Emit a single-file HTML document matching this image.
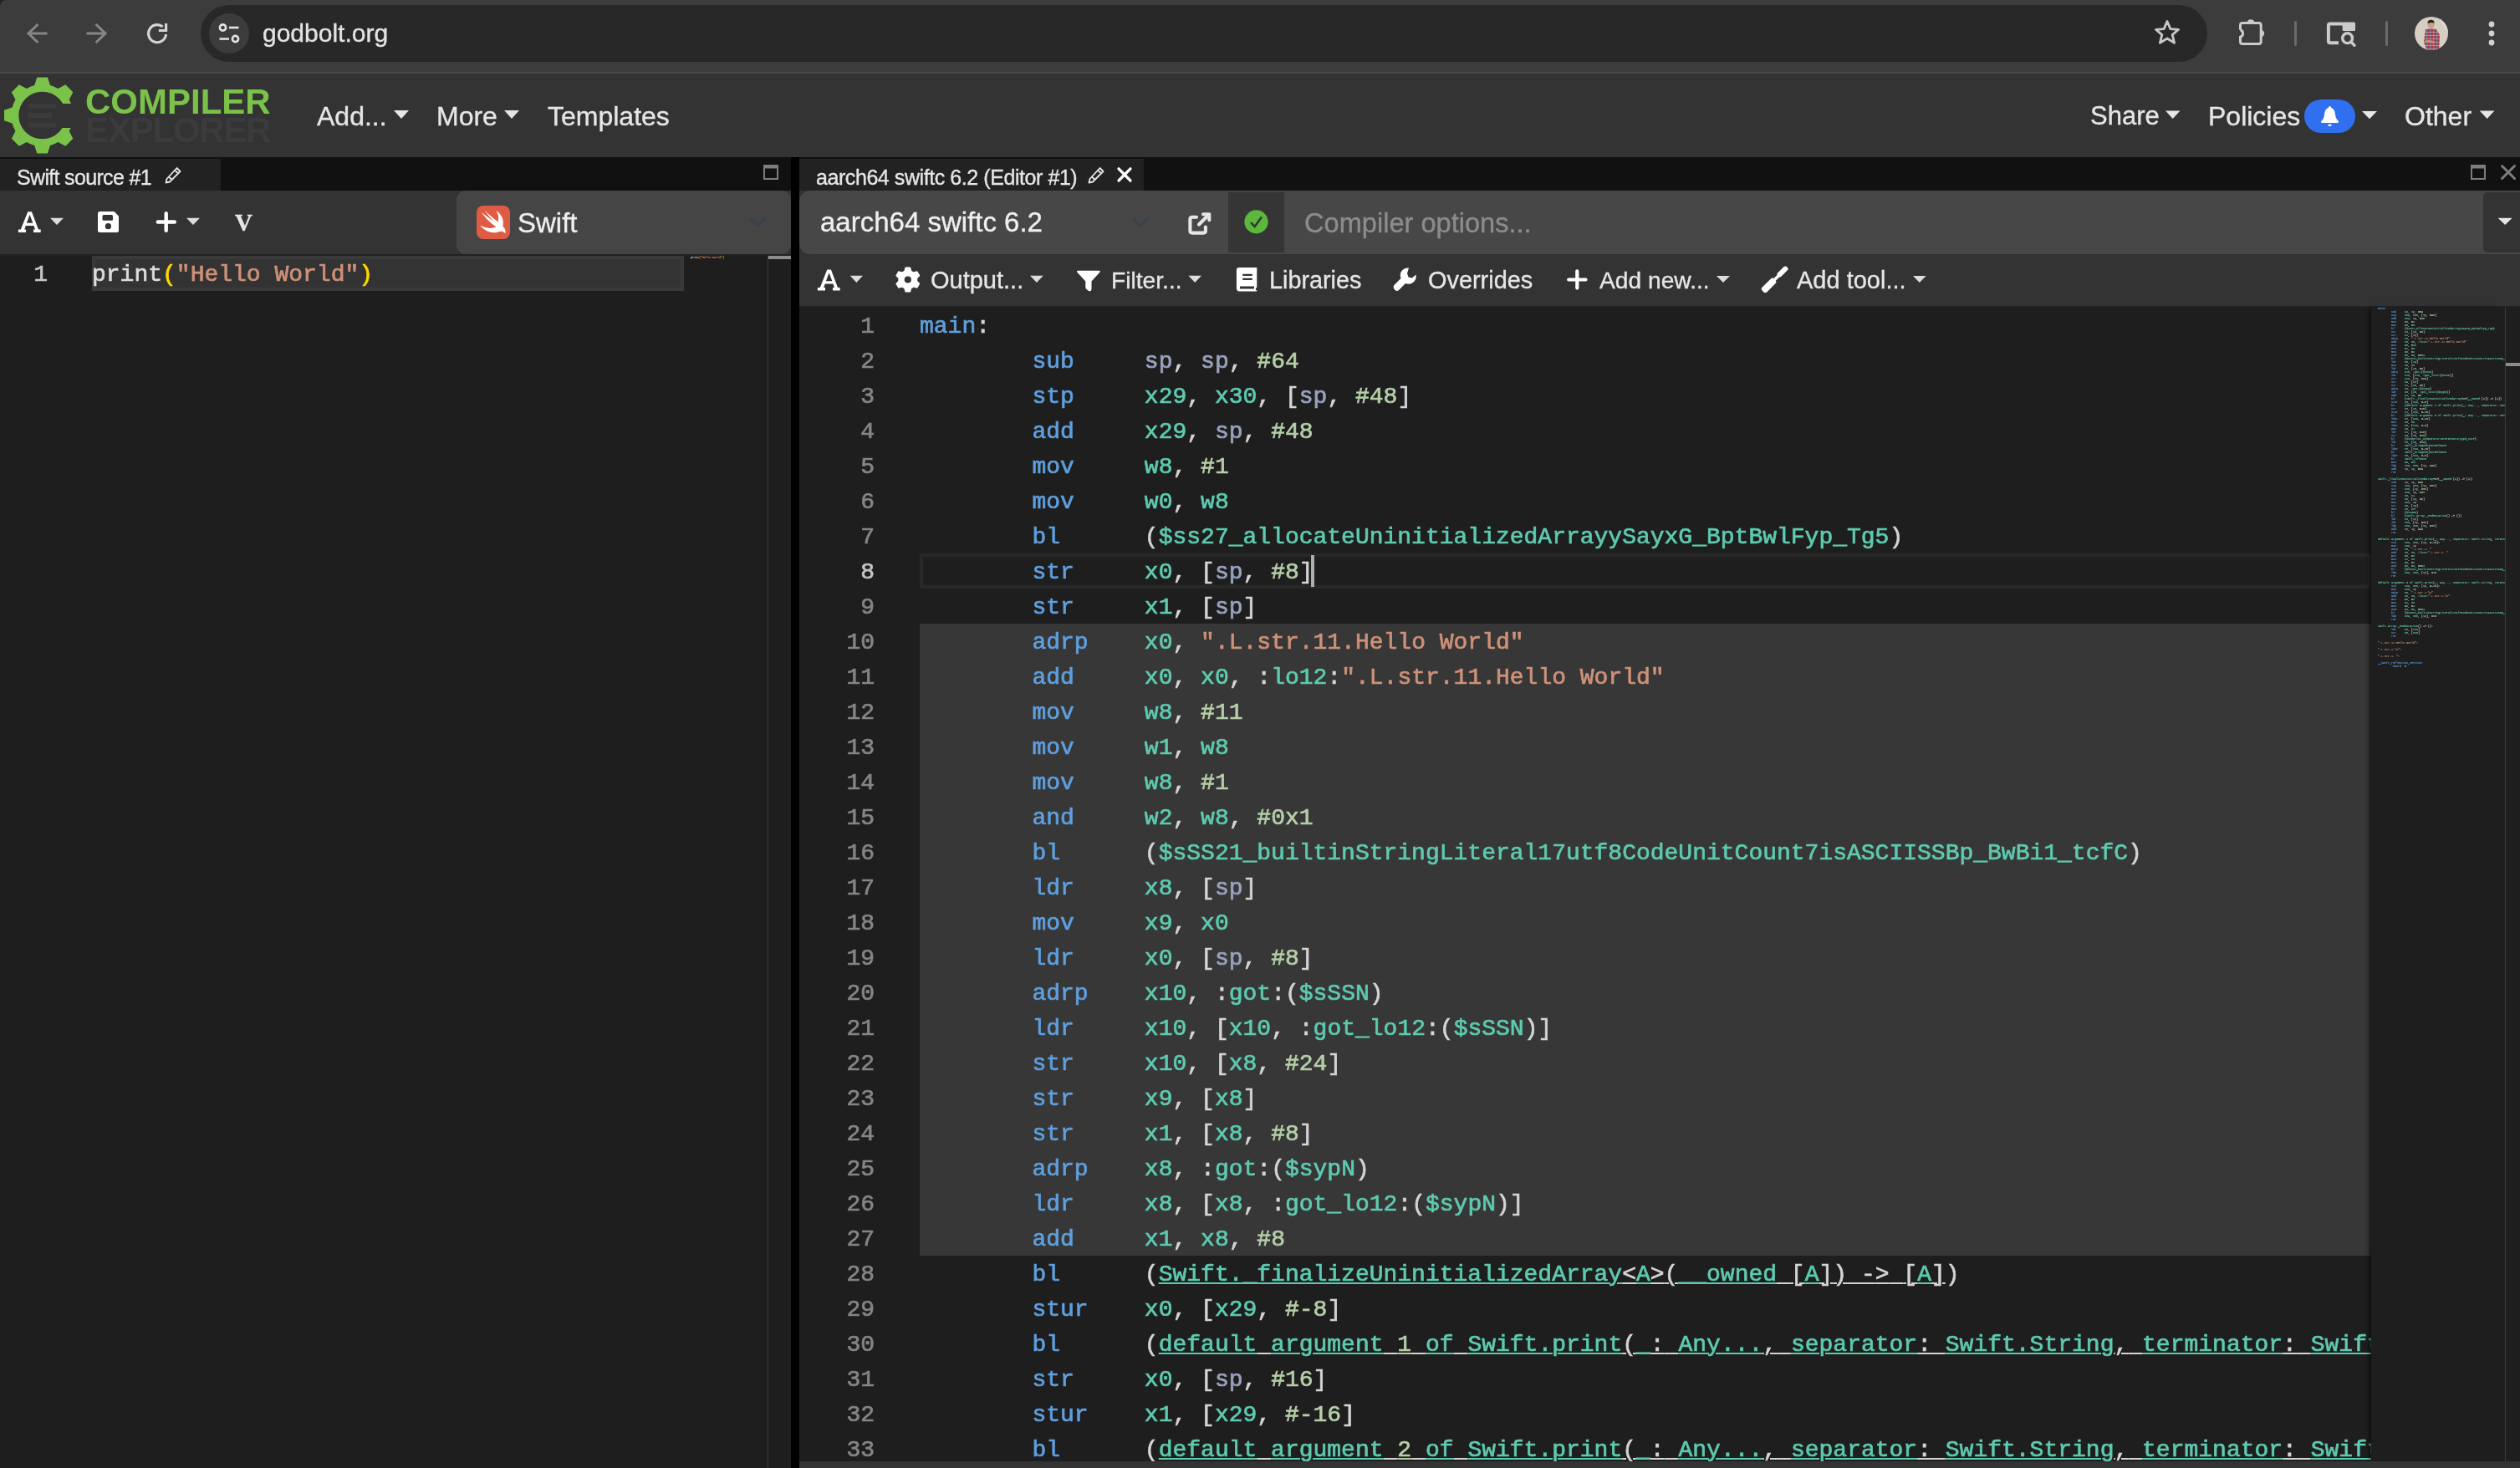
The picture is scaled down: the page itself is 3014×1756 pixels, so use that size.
<!DOCTYPE html>
<html><head><meta charset="utf-8">
<style>
html,body{margin:0;padding:0;}
body{width:3014px;height:1756px;overflow:hidden;background:#1e1e1e;position:relative;font-family:"Liberation Sans",sans-serif;}
.a{position:absolute;}
.t{position:absolute;white-space:pre;font-family:"Liberation Sans",sans-serif;-webkit-text-stroke:0.35px currentColor;}
.m{font-family:"Liberation Mono",monospace;-webkit-text-stroke:0.7px currentColor;}
svg{position:absolute;overflow:visible;}
.t,.a.m{will-change:transform;}
</style></head><body>

<!-- ===== Browser chrome ===== -->
<div class="a" style="left:0;top:0;width:3014px;height:86px;background:#3c3c3c;"></div>
<div class="a" style="left:0;top:86px;width:3014px;height:2px;background:#484a4a;"></div>
<!-- address pill -->
<div class="a" style="left:240px;top:6px;width:2400px;height:68px;border-radius:34px;background:#282828;"></div>
<div class="a" style="left:250px;top:16px;width:48px;height:48px;border-radius:24px;background:#3c3c3c;"></div>
<div class="t" id="url" style="left:314px;top:20px;font-size:30px;line-height:40px;color:#e3e3e3;">godbolt.org</div>


<!-- window corner -->
<div class="a" style="left:0;top:0;width:20px;height:20px;background:#1f2120;"></div>
<div class="a" style="left:0;top:0;width:40px;height:40px;border-top-left-radius:7px;background:#3c3c3c;"></div>
<!-- back / forward -->
<svg style="left:0;top:0" width="3014" height="88">
 <g fill="none" stroke="#868686" stroke-width="3" stroke-linecap="square">
  <path d="M34.5 40 H55 M44.3 30 L34 40 L44.3 50"/>
  <path d="M105 40 H125.5 M115.7 30 L126 40 L115.7 50"/>
 </g>
 <g fill="none" stroke="#d4d4d4" stroke-width="3.2">
  <path d="M198.5 41 A10.5 10.5 0 1 1 194.6 32" />
  <path d="M189.8 36.5 H198.6 V27.9" />
 </g>
 <!-- tune icon -->
 <g fill="none" stroke="#e3e3e3" stroke-width="2.6">
  <circle cx="266.5" cy="33" r="3.6"/>
  <path d="M274 33 H285.5"/>
  <path d="M262.5 46.5 H274"/>
  <circle cx="281.5" cy="46.5" r="3.6"/>
 </g>
 <!-- star -->
 <path d="M2592 25.5 L2595.9 34.6 L2605.6 35.3 L2598.2 41.6 L2600.6 51.3 L2592 46 L2583.4 51.3 L2585.8 41.6 L2578.4 35.3 L2588.1 34.6 Z" fill="none" stroke="#c8c8c8" stroke-width="2.8" stroke-linejoin="round"/>
 <!-- puzzle -->
 <path d="M2679.5 35.8 V30 Q2679.5 27.5 2682 27.5 H2701.5 Q2704.2 27.5 2704.2 30 V50 Q2704.2 52.4 2701.5 52.4 H2682 Q2679.5 52.4 2679.5 50 V44.2 A4.4 4.4 0 0 0 2679.5 35.8" fill="none" stroke="#cbcbcb" stroke-width="3"/>
 <path d="M2687.8 27.5 A4.2 4.2 0 0 1 2696.2 27.5 Z" fill="#cbcbcb"/>
 <path d="M2704 35.8 A4.2 4.2 0 0 1 2704 44.2 Z" fill="#cbcbcb"/>
 <rect x="2744" y="25" width="3" height="30" rx="1.5" fill="#6a6a6a"/>
 <rect x="2853" y="25" width="3" height="30" rx="1.5" fill="#6a6a6a"/>
 <!-- tab search -->
 <path d="M2797 51.2 H2787 Q2784.9 51.2 2784.9 49 V30.8 Q2784.9 28.6 2787 28.6 H2802" fill="none" stroke="#cbcbcb" stroke-width="4"/>
 <rect x="2801.6" y="26.6" width="15.4" height="10.4" rx="1.5" fill="#cbcbcb"/>
 <circle cx="2807.6" cy="45.7" r="5.9" fill="none" stroke="#cbcbcb" stroke-width="3.4"/>
 <path d="M2812 50.2 L2816 54.2" stroke="#cbcbcb" stroke-width="3.4" stroke-linecap="round"/>
 <!-- avatar -->
 <defs>
  <clipPath id="avc"><circle cx="2908" cy="40" r="20"/></clipPath>
  <pattern id="plaid" x="0" y="0" width="4" height="4" patternUnits="userSpaceOnUse">
   <rect width="4" height="4" fill="#a63a48"/><rect x="2" width="1.3" height="4" fill="#6b7fa0"/><rect y="2" width="4" height="1" fill="#c8b8c0" fill-opacity="0.6"/>
  </pattern>
 </defs>
 <g clip-path="url(#avc)">
  <rect x="2886" y="18" width="44" height="44" fill="#d5cec3"/>
  <path d="M2915 18 L2930 42 V30 Z" fill="#e2ddd4"/>
  <path d="M2901 35 Q2907 33 2914 35 L2918 42 L2917 62 H2903 L2899 50 Z" fill="url(#plaid)"/>
  <path d="M2900 48.5 Q2907 47 2913 50 L2911 52 Q2905 50.5 2900.5 51 Z" fill="#c89070"/>
  <ellipse cx="2907.5" cy="29.5" rx="4" ry="4.6" fill="#caa080"/>
  <path d="M2903.4 28 Q2903.5 23.8 2907.6 23.8 Q2911.6 23.8 2911.6 28 Q2909 26 2903.4 28 Z" fill="#2a211c"/>
 </g>
 <!-- kebab -->
 <circle cx="2980" cy="29" r="3.4" fill="#d0d0d0"/>
 <circle cx="2980" cy="40" r="3.4" fill="#d0d0d0"/>
 <circle cx="2980" cy="51" r="3.4" fill="#d0d0d0"/>
</svg>

<!-- ===== Navbar ===== -->
<div class="a" style="left:0;top:88px;width:3014px;height:100px;background:#333333;"></div>


<svg style="left:0;top:0" width="3014" height="188">
 <path d="M41.2 102.0 L44.3 92.4 L56.9 92.4 L60.0 102.0 A37.2 37.2 0 0 1 69.4 105.9 L78.4 101.3 L87.3 110.2 L82.7 119.2 A37.2 37.2 0 0 1 86.6 128.6 L96.2 131.7 L96.2 144.3 L86.6 147.4 A37.2 37.2 0 0 1 82.7 156.8 L87.3 165.8 L78.4 174.7 L69.4 170.1 A37.2 37.2 0 0 1 60.0 174.0 L56.9 183.6 L44.3 183.6 L41.2 174.0 A37.2 37.2 0 0 1 31.8 170.1 L22.8 174.7 L13.9 165.8 L18.5 156.8 A37.2 37.2 0 0 1 14.6 147.4 L5.0 144.3 L5.0 131.7 L14.6 128.6 A37.2 37.2 0 0 1 18.5 119.2 L13.9 110.2 L22.8 101.3 L31.8 105.9 A37.2 37.2 0 0 1 41.2 102.0 Z" fill="#7bc24a"/>
 <circle cx="50.6" cy="138.0" r="28.3" fill="#333333"/>
 <rect x="56" y="124" width="50" height="28.5" fill="#333333" shape-rendering="crispEdges"/>
 <rect x="33.7" y="124.2" width="33.8" height="5.6" fill="#3b3b3e"/>
 <rect x="33.7" y="135.2" width="28" height="5.8" fill="#3b3b3e"/>
 <rect x="33.7" y="146.7" width="33.8" height="5.8" fill="#3b3b3e"/>
 <g fill="#e6e6e6">
  <path d="M471 132 H489 L480 142 Z"/>
  <path d="M603 132 H621 L612 142 Z"/>
  <path d="M2590 132.6 H2607.5 L2598.7 142 Z"/>
  <path d="M2825 133 H2843 L2834 142.2 Z"/>
  <path d="M2965.7 132.6 H2983.5 L2974.6 142 Z"/>
 </g>
 <rect x="2756" y="119" width="61" height="40" rx="20" fill="#3070f0"/>
 <path d="M2786.5 127 Q2788 127 2788.3 129 Q2792.5 130.5 2793 137 Q2793.3 142 2797 145.3 Q2797.3 147 2795.5 147 H2777.5 Q2775.8 147 2776.1 145.3 Q2779.7 142 2780 137 Q2780.5 130.5 2784.7 129 Q2785 127 2786.5 127 Z" fill="#fff"/>
 <path d="M2784 148.8 H2789 Q2788.5 151.2 2786.5 151.2 Q2784.5 151.2 2784 148.8 Z" fill="#fff"/>
</svg>
<div class="t" style="left:102px;top:101px;font-size:42px;line-height:42px;font-weight:bold;color:#7bc24a;letter-spacing:0px;-webkit-text-stroke:0;">COMPILER</div>
<div class="t" style="left:102px;top:135px;font-size:42px;line-height:42px;font-weight:bold;color:#3b3b3e;letter-spacing:-1.2px;-webkit-text-stroke:0;">EXPLORER</div>
<div class="t" style="left:379px;top:119px;font-size:32px;line-height:40px;color:#e6e6e6;">Add...</div>
<div class="t" style="left:522px;top:119px;font-size:32px;line-height:40px;color:#e6e6e6;">More</div>
<div class="t" style="left:655px;top:119px;font-size:32px;line-height:40px;color:#e6e6e6;">Templates</div>
<div class="t" style="left:2500px;top:119px;font-size:31px;line-height:40px;color:#e6e6e6;">Share</div>
<div class="t" style="left:2641px;top:119px;font-size:32px;line-height:40px;color:#e6e6e6;">Policies</div>
<div class="t" style="left:2876px;top:119px;font-size:32px;line-height:40px;color:#e6e6e6;">Other</div>

<!-- ===== Layout ===== -->
<div class="a" style="left:0;top:188px;width:3014px;height:1568px;background:#000;"></div>

<!-- left pane -->
<div class="a" style="left:0;top:188px;width:946px;height:40px;background:#111;"></div>
<div class="a" style="left:0;top:190px;width:264px;height:38px;background:#222;"></div>
<div class="a" style="left:0;top:228px;width:946px;height:76px;background:#333;"></div>
<div class="a" style="left:0;top:304px;width:946px;height:1452px;background:#1e1e1e;"></div>

<!-- right pane -->
<div class="a" style="left:956px;top:188px;width:2058px;height:40px;background:#111;"></div>
<div class="a" style="left:956px;top:190px;width:412px;height:38px;background:#222;"></div>
<div class="a" style="left:956px;top:228px;width:2058px;height:138px;background:#333;"></div>
<div class="a" style="left:956px;top:366px;width:2058px;height:1390px;background:#1e1e1e;"></div>












<!-- ===== EDITORS ===== -->
<div class="a" style="left:0;top:304px;width:946px;height:2px;background:#202224;"></div>
<div class="a" style="left:110px;top:306px;width:700px;height:34px;border:4px solid #3a3a3a;background:#333;"></div>
<div class="t m" style="left:0;top:306px;width:57px;text-align:right;font-size:28px;line-height:42px;height:42px;padding-top:2px;color:#c6c6c6;">1</div>
<div class="a m" style="left:110px;top:306px;font-size:28px;line-height:42px;white-space:pre;padding-top:2px;"><span style="color:#dcdcdc">print</span><span style="color:#ffd700">(</span><span style="color:#ce9178">&quot;Hello World&quot;</span><span style="color:#ffd700">)</span></div>
<div class="a" style="left:826px;top:306px;width:92px;height:4px;overflow:hidden;font-family:'Liberation Mono',monospace;font-size:3.3333px;line-height:4px;white-space:pre;-webkit-text-stroke:0.1px currentColor;"><span style="color:#dcdcdc">print</span><span style="color:#ffd700">(</span><span style="color:#ce9178">&quot;Hello World&quot;</span><span style="color:#ffd700">)</span></div>
<div class="a" style="left:918px;top:306px;width:1px;height:1450px;background:#3a3a3a;"></div>
<div class="a" style="left:919px;top:306px;width:27px;height:4px;background:#8c8c8c;"></div>
<div class="a" style="left:956px;top:366px;width:2058px;height:2px;background:#202224;"></div>
<div class="a" style="left:1100px;top:746px;width:1736px;height:756px;background:#373737;"></div>
<div class="a" style="left:1100px;top:662px;width:1728px;height:34px;border:4px solid #282828;"></div>
<div class="t m" style="left:946px;top:368px;width:100px;text-align:right;font-size:28px;line-height:42px;height:42px;padding-top:2px;color:#858585;">1</div>
<div class="t m" style="left:946px;top:410px;width:100px;text-align:right;font-size:28px;line-height:42px;height:42px;padding-top:2px;color:#858585;">2</div>
<div class="t m" style="left:946px;top:452px;width:100px;text-align:right;font-size:28px;line-height:42px;height:42px;padding-top:2px;color:#858585;">3</div>
<div class="t m" style="left:946px;top:494px;width:100px;text-align:right;font-size:28px;line-height:42px;height:42px;padding-top:2px;color:#858585;">4</div>
<div class="t m" style="left:946px;top:536px;width:100px;text-align:right;font-size:28px;line-height:42px;height:42px;padding-top:2px;color:#858585;">5</div>
<div class="t m" style="left:946px;top:578px;width:100px;text-align:right;font-size:28px;line-height:42px;height:42px;padding-top:2px;color:#858585;">6</div>
<div class="t m" style="left:946px;top:620px;width:100px;text-align:right;font-size:28px;line-height:42px;height:42px;padding-top:2px;color:#858585;">7</div>
<div class="t m" style="left:946px;top:662px;width:100px;text-align:right;font-size:28px;line-height:42px;height:42px;padding-top:2px;color:#c6c6c6;">8</div>
<div class="t m" style="left:946px;top:704px;width:100px;text-align:right;font-size:28px;line-height:42px;height:42px;padding-top:2px;color:#858585;">9</div>
<div class="t m" style="left:946px;top:746px;width:100px;text-align:right;font-size:28px;line-height:42px;height:42px;padding-top:2px;color:#858585;">10</div>
<div class="t m" style="left:946px;top:788px;width:100px;text-align:right;font-size:28px;line-height:42px;height:42px;padding-top:2px;color:#858585;">11</div>
<div class="t m" style="left:946px;top:830px;width:100px;text-align:right;font-size:28px;line-height:42px;height:42px;padding-top:2px;color:#858585;">12</div>
<div class="t m" style="left:946px;top:872px;width:100px;text-align:right;font-size:28px;line-height:42px;height:42px;padding-top:2px;color:#858585;">13</div>
<div class="t m" style="left:946px;top:914px;width:100px;text-align:right;font-size:28px;line-height:42px;height:42px;padding-top:2px;color:#858585;">14</div>
<div class="t m" style="left:946px;top:956px;width:100px;text-align:right;font-size:28px;line-height:42px;height:42px;padding-top:2px;color:#858585;">15</div>
<div class="t m" style="left:946px;top:998px;width:100px;text-align:right;font-size:28px;line-height:42px;height:42px;padding-top:2px;color:#858585;">16</div>
<div class="t m" style="left:946px;top:1040px;width:100px;text-align:right;font-size:28px;line-height:42px;height:42px;padding-top:2px;color:#858585;">17</div>
<div class="t m" style="left:946px;top:1082px;width:100px;text-align:right;font-size:28px;line-height:42px;height:42px;padding-top:2px;color:#858585;">18</div>
<div class="t m" style="left:946px;top:1124px;width:100px;text-align:right;font-size:28px;line-height:42px;height:42px;padding-top:2px;color:#858585;">19</div>
<div class="t m" style="left:946px;top:1166px;width:100px;text-align:right;font-size:28px;line-height:42px;height:42px;padding-top:2px;color:#858585;">20</div>
<div class="t m" style="left:946px;top:1208px;width:100px;text-align:right;font-size:28px;line-height:42px;height:42px;padding-top:2px;color:#858585;">21</div>
<div class="t m" style="left:946px;top:1250px;width:100px;text-align:right;font-size:28px;line-height:42px;height:42px;padding-top:2px;color:#858585;">22</div>
<div class="t m" style="left:946px;top:1292px;width:100px;text-align:right;font-size:28px;line-height:42px;height:42px;padding-top:2px;color:#858585;">23</div>
<div class="t m" style="left:946px;top:1334px;width:100px;text-align:right;font-size:28px;line-height:42px;height:42px;padding-top:2px;color:#858585;">24</div>
<div class="t m" style="left:946px;top:1376px;width:100px;text-align:right;font-size:28px;line-height:42px;height:42px;padding-top:2px;color:#858585;">25</div>
<div class="t m" style="left:946px;top:1418px;width:100px;text-align:right;font-size:28px;line-height:42px;height:42px;padding-top:2px;color:#858585;">26</div>
<div class="t m" style="left:946px;top:1460px;width:100px;text-align:right;font-size:28px;line-height:42px;height:42px;padding-top:2px;color:#858585;">27</div>
<div class="t m" style="left:946px;top:1502px;width:100px;text-align:right;font-size:28px;line-height:42px;height:42px;padding-top:2px;color:#858585;">28</div>
<div class="t m" style="left:946px;top:1544px;width:100px;text-align:right;font-size:28px;line-height:42px;height:42px;padding-top:2px;color:#858585;">29</div>
<div class="t m" style="left:946px;top:1586px;width:100px;text-align:right;font-size:28px;line-height:42px;height:42px;padding-top:2px;color:#858585;">30</div>
<div class="t m" style="left:946px;top:1628px;width:100px;text-align:right;font-size:28px;line-height:42px;height:42px;padding-top:2px;color:#858585;">31</div>
<div class="t m" style="left:946px;top:1670px;width:100px;text-align:right;font-size:28px;line-height:42px;height:42px;padding-top:2px;color:#858585;">32</div>
<div class="t m" style="left:946px;top:1712px;width:100px;text-align:right;font-size:28px;line-height:42px;height:42px;padding-top:2px;color:#858585;">33</div>
<div class="a m" style="left:1100px;top:368px;width:1736px;height:1380px;overflow:hidden;font-size:28px;line-height:42px;"><div style="height:42px;padding-top:2px;box-sizing:border-box;white-space:pre;"><span style="color:#5f9fdd">main</span><span style="color:#d4d4d4">:</span></div><div style="height:42px;padding-top:2px;box-sizing:border-box;white-space:pre;"><span style="color:#d4d4d4">        </span><span style="color:#5f9fdd">sub</span><span style="color:#d4d4d4">     </span><span style="color:#9aa2bd">sp</span><span style="color:#d4d4d4">,</span><span style="color:#d4d4d4"> </span><span style="color:#9aa2bd">sp</span><span style="color:#d4d4d4">,</span><span style="color:#d4d4d4"> </span><span style="color:#b5cea8">#64</span></div><div style="height:42px;padding-top:2px;box-sizing:border-box;white-space:pre;"><span style="color:#d4d4d4">        </span><span style="color:#5f9fdd">stp</span><span style="color:#d4d4d4">     </span><span style="color:#5ecab0">x29</span><span style="color:#d4d4d4">,</span><span style="color:#d4d4d4"> </span><span style="color:#5ecab0">x30</span><span style="color:#d4d4d4">,</span><span style="color:#d4d4d4"> </span><span style="color:#d4d4d4">[</span><span style="color:#9aa2bd">sp</span><span style="color:#d4d4d4">,</span><span style="color:#d4d4d4"> </span><span style="color:#b5cea8">#48</span><span style="color:#d4d4d4">]</span></div><div style="height:42px;padding-top:2px;box-sizing:border-box;white-space:pre;"><span style="color:#d4d4d4">        </span><span style="color:#5f9fdd">add</span><span style="color:#d4d4d4">     </span><span style="color:#5ecab0">x29</span><span style="color:#d4d4d4">,</span><span style="color:#d4d4d4"> </span><span style="color:#9aa2bd">sp</span><span style="color:#d4d4d4">,</span><span style="color:#d4d4d4"> </span><span style="color:#b5cea8">#48</span></div><div style="height:42px;padding-top:2px;box-sizing:border-box;white-space:pre;"><span style="color:#d4d4d4">        </span><span style="color:#5f9fdd">mov</span><span style="color:#d4d4d4">     </span><span style="color:#5ecab0">w8</span><span style="color:#d4d4d4">,</span><span style="color:#d4d4d4"> </span><span style="color:#b5cea8">#1</span></div><div style="height:42px;padding-top:2px;box-sizing:border-box;white-space:pre;"><span style="color:#d4d4d4">        </span><span style="color:#5f9fdd">mov</span><span style="color:#d4d4d4">     </span><span style="color:#5ecab0">w0</span><span style="color:#d4d4d4">,</span><span style="color:#d4d4d4"> </span><span style="color:#5ecab0">w8</span></div><div style="height:42px;padding-top:2px;box-sizing:border-box;white-space:pre;"><span style="color:#d4d4d4">        </span><span style="color:#5f9fdd">bl</span><span style="color:#d4d4d4">      </span><span style="color:#d4d4d4">(</span><span style="color:#5ecab0">$ss27_allocateUninitializedArrayySayxG_BptBwlFyp_Tg5</span><span style="color:#d4d4d4">)</span></div><div style="height:42px;padding-top:2px;box-sizing:border-box;white-space:pre;"><span style="color:#d4d4d4">        </span><span style="color:#5f9fdd">str</span><span style="color:#d4d4d4">     </span><span style="color:#5ecab0">x0</span><span style="color:#d4d4d4">,</span><span style="color:#d4d4d4"> </span><span style="color:#d4d4d4">[</span><span style="color:#9aa2bd">sp</span><span style="color:#d4d4d4">,</span><span style="color:#d4d4d4"> </span><span style="color:#b5cea8">#8</span><span style="color:#d4d4d4">]</span></div><div style="height:42px;padding-top:2px;box-sizing:border-box;white-space:pre;"><span style="color:#d4d4d4">        </span><span style="color:#5f9fdd">str</span><span style="color:#d4d4d4">     </span><span style="color:#5ecab0">x1</span><span style="color:#d4d4d4">,</span><span style="color:#d4d4d4"> </span><span style="color:#d4d4d4">[</span><span style="color:#9aa2bd">sp</span><span style="color:#d4d4d4">]</span></div><div style="height:42px;padding-top:2px;box-sizing:border-box;white-space:pre;"><span style="color:#d4d4d4">        </span><span style="color:#5f9fdd">adrp</span><span style="color:#d4d4d4">    </span><span style="color:#5ecab0">x0</span><span style="color:#d4d4d4">,</span><span style="color:#d4d4d4"> </span><span style="color:#ce9178">&quot;.L.str.11.Hello World&quot;</span></div><div style="height:42px;padding-top:2px;box-sizing:border-box;white-space:pre;"><span style="color:#d4d4d4">        </span><span style="color:#5f9fdd">add</span><span style="color:#d4d4d4">     </span><span style="color:#5ecab0">x0</span><span style="color:#d4d4d4">,</span><span style="color:#d4d4d4"> </span><span style="color:#5ecab0">x0</span><span style="color:#d4d4d4">,</span><span style="color:#d4d4d4"> </span><span style="color:#d4d4d4">:</span><span style="color:#5ecab0">lo12</span><span style="color:#d4d4d4">:</span><span style="color:#ce9178">&quot;.L.str.11.Hello World&quot;</span></div><div style="height:42px;padding-top:2px;box-sizing:border-box;white-space:pre;"><span style="color:#d4d4d4">        </span><span style="color:#5f9fdd">mov</span><span style="color:#d4d4d4">     </span><span style="color:#5ecab0">w8</span><span style="color:#d4d4d4">,</span><span style="color:#d4d4d4"> </span><span style="color:#b5cea8">#11</span></div><div style="height:42px;padding-top:2px;box-sizing:border-box;white-space:pre;"><span style="color:#d4d4d4">        </span><span style="color:#5f9fdd">mov</span><span style="color:#d4d4d4">     </span><span style="color:#5ecab0">w1</span><span style="color:#d4d4d4">,</span><span style="color:#d4d4d4"> </span><span style="color:#5ecab0">w8</span></div><div style="height:42px;padding-top:2px;box-sizing:border-box;white-space:pre;"><span style="color:#d4d4d4">        </span><span style="color:#5f9fdd">mov</span><span style="color:#d4d4d4">     </span><span style="color:#5ecab0">w8</span><span style="color:#d4d4d4">,</span><span style="color:#d4d4d4"> </span><span style="color:#b5cea8">#1</span></div><div style="height:42px;padding-top:2px;box-sizing:border-box;white-space:pre;"><span style="color:#d4d4d4">        </span><span style="color:#5f9fdd">and</span><span style="color:#d4d4d4">     </span><span style="color:#5ecab0">w2</span><span style="color:#d4d4d4">,</span><span style="color:#d4d4d4"> </span><span style="color:#5ecab0">w8</span><span style="color:#d4d4d4">,</span><span style="color:#d4d4d4"> </span><span style="color:#b5cea8">#0x1</span></div><div style="height:42px;padding-top:2px;box-sizing:border-box;white-space:pre;"><span style="color:#d4d4d4">        </span><span style="color:#5f9fdd">bl</span><span style="color:#d4d4d4">      </span><span style="color:#d4d4d4">(</span><span style="color:#5ecab0">$sSS21_builtinStringLiteral17utf8CodeUnitCount7isASCIISSBp_BwBi1_tcfC</span><span style="color:#d4d4d4">)</span></div><div style="height:42px;padding-top:2px;box-sizing:border-box;white-space:pre;"><span style="color:#d4d4d4">        </span><span style="color:#5f9fdd">ldr</span><span style="color:#d4d4d4">     </span><span style="color:#5ecab0">x8</span><span style="color:#d4d4d4">,</span><span style="color:#d4d4d4"> </span><span style="color:#d4d4d4">[</span><span style="color:#9aa2bd">sp</span><span style="color:#d4d4d4">]</span></div><div style="height:42px;padding-top:2px;box-sizing:border-box;white-space:pre;"><span style="color:#d4d4d4">        </span><span style="color:#5f9fdd">mov</span><span style="color:#d4d4d4">     </span><span style="color:#5ecab0">x9</span><span style="color:#d4d4d4">,</span><span style="color:#d4d4d4"> </span><span style="color:#5ecab0">x0</span></div><div style="height:42px;padding-top:2px;box-sizing:border-box;white-space:pre;"><span style="color:#d4d4d4">        </span><span style="color:#5f9fdd">ldr</span><span style="color:#d4d4d4">     </span><span style="color:#5ecab0">x0</span><span style="color:#d4d4d4">,</span><span style="color:#d4d4d4"> </span><span style="color:#d4d4d4">[</span><span style="color:#9aa2bd">sp</span><span style="color:#d4d4d4">,</span><span style="color:#d4d4d4"> </span><span style="color:#b5cea8">#8</span><span style="color:#d4d4d4">]</span></div><div style="height:42px;padding-top:2px;box-sizing:border-box;white-space:pre;"><span style="color:#d4d4d4">        </span><span style="color:#5f9fdd">adrp</span><span style="color:#d4d4d4">    </span><span style="color:#5ecab0">x10</span><span style="color:#d4d4d4">,</span><span style="color:#d4d4d4"> </span><span style="color:#d4d4d4">:</span><span style="color:#5ecab0">got</span><span style="color:#d4d4d4">:</span><span style="color:#d4d4d4">(</span><span style="color:#5ecab0">$sSSN</span><span style="color:#d4d4d4">)</span></div><div style="height:42px;padding-top:2px;box-sizing:border-box;white-space:pre;"><span style="color:#d4d4d4">        </span><span style="color:#5f9fdd">ldr</span><span style="color:#d4d4d4">     </span><span style="color:#5ecab0">x10</span><span style="color:#d4d4d4">,</span><span style="color:#d4d4d4"> </span><span style="color:#d4d4d4">[</span><span style="color:#5ecab0">x10</span><span style="color:#d4d4d4">,</span><span style="color:#d4d4d4"> </span><span style="color:#d4d4d4">:</span><span style="color:#5ecab0">got_lo12</span><span style="color:#d4d4d4">:</span><span style="color:#d4d4d4">(</span><span style="color:#5ecab0">$sSSN</span><span style="color:#d4d4d4">)</span><span style="color:#d4d4d4">]</span></div><div style="height:42px;padding-top:2px;box-sizing:border-box;white-space:pre;"><span style="color:#d4d4d4">        </span><span style="color:#5f9fdd">str</span><span style="color:#d4d4d4">     </span><span style="color:#5ecab0">x10</span><span style="color:#d4d4d4">,</span><span style="color:#d4d4d4"> </span><span style="color:#d4d4d4">[</span><span style="color:#5ecab0">x8</span><span style="color:#d4d4d4">,</span><span style="color:#d4d4d4"> </span><span style="color:#b5cea8">#24</span><span style="color:#d4d4d4">]</span></div><div style="height:42px;padding-top:2px;box-sizing:border-box;white-space:pre;"><span style="color:#d4d4d4">        </span><span style="color:#5f9fdd">str</span><span style="color:#d4d4d4">     </span><span style="color:#5ecab0">x9</span><span style="color:#d4d4d4">,</span><span style="color:#d4d4d4"> </span><span style="color:#d4d4d4">[</span><span style="color:#5ecab0">x8</span><span style="color:#d4d4d4">]</span></div><div style="height:42px;padding-top:2px;box-sizing:border-box;white-space:pre;"><span style="color:#d4d4d4">        </span><span style="color:#5f9fdd">str</span><span style="color:#d4d4d4">     </span><span style="color:#5ecab0">x1</span><span style="color:#d4d4d4">,</span><span style="color:#d4d4d4"> </span><span style="color:#d4d4d4">[</span><span style="color:#5ecab0">x8</span><span style="color:#d4d4d4">,</span><span style="color:#d4d4d4"> </span><span style="color:#b5cea8">#8</span><span style="color:#d4d4d4">]</span></div><div style="height:42px;padding-top:2px;box-sizing:border-box;white-space:pre;"><span style="color:#d4d4d4">        </span><span style="color:#5f9fdd">adrp</span><span style="color:#d4d4d4">    </span><span style="color:#5ecab0">x8</span><span style="color:#d4d4d4">,</span><span style="color:#d4d4d4"> </span><span style="color:#d4d4d4">:</span><span style="color:#5ecab0">got</span><span style="color:#d4d4d4">:</span><span style="color:#d4d4d4">(</span><span style="color:#5ecab0">$sypN</span><span style="color:#d4d4d4">)</span></div><div style="height:42px;padding-top:2px;box-sizing:border-box;white-space:pre;"><span style="color:#d4d4d4">        </span><span style="color:#5f9fdd">ldr</span><span style="color:#d4d4d4">     </span><span style="color:#5ecab0">x8</span><span style="color:#d4d4d4">,</span><span style="color:#d4d4d4"> </span><span style="color:#d4d4d4">[</span><span style="color:#5ecab0">x8</span><span style="color:#d4d4d4">,</span><span style="color:#d4d4d4"> </span><span style="color:#d4d4d4">:</span><span style="color:#5ecab0">got_lo12</span><span style="color:#d4d4d4">:</span><span style="color:#d4d4d4">(</span><span style="color:#5ecab0">$sypN</span><span style="color:#d4d4d4">)</span><span style="color:#d4d4d4">]</span></div><div style="height:42px;padding-top:2px;box-sizing:border-box;white-space:pre;"><span style="color:#d4d4d4">        </span><span style="color:#5f9fdd">add</span><span style="color:#d4d4d4">     </span><span style="color:#5ecab0">x1</span><span style="color:#d4d4d4">,</span><span style="color:#d4d4d4"> </span><span style="color:#5ecab0">x8</span><span style="color:#d4d4d4">,</span><span style="color:#d4d4d4"> </span><span style="color:#b5cea8">#8</span></div><div style="height:42px;padding-top:2px;box-sizing:border-box;white-space:pre;"><span style="color:#d4d4d4">        </span><span style="color:#5f9fdd">bl</span><span style="color:#d4d4d4">      </span><span style="color:#d4d4d4">(</span><span style="color:#5ecab0;text-decoration:underline;text-underline-offset:2px;text-decoration-thickness:2px">Swift._finalizeUninitializedArray</span><span style="color:#d4d4d4;text-decoration:underline;text-underline-offset:2px;text-decoration-thickness:2px">&lt;</span><span style="color:#5ecab0;text-decoration:underline;text-underline-offset:2px;text-decoration-thickness:2px">A</span><span style="color:#d4d4d4;text-decoration:underline;text-underline-offset:2px;text-decoration-thickness:2px">&gt;</span><span style="color:#d4d4d4;text-decoration:underline;text-underline-offset:2px;text-decoration-thickness:2px">(</span><span style="color:#5ecab0;text-decoration:underline;text-underline-offset:2px;text-decoration-thickness:2px">__owned</span><span style="color:#d4d4d4;text-decoration:underline;text-underline-offset:2px;text-decoration-thickness:2px"> </span><span style="color:#d4d4d4;text-decoration:underline;text-underline-offset:2px;text-decoration-thickness:2px">[</span><span style="color:#5ecab0;text-decoration:underline;text-underline-offset:2px;text-decoration-thickness:2px">A</span><span style="color:#d4d4d4;text-decoration:underline;text-underline-offset:2px;text-decoration-thickness:2px">]</span><span style="color:#d4d4d4;text-decoration:underline;text-underline-offset:2px;text-decoration-thickness:2px">)</span><span style="color:#d4d4d4;text-decoration:underline;text-underline-offset:2px;text-decoration-thickness:2px"> </span><span style="color:#d4d4d4;text-decoration:underline;text-underline-offset:2px;text-decoration-thickness:2px">-</span><span style="color:#d4d4d4;text-decoration:underline;text-underline-offset:2px;text-decoration-thickness:2px">&gt;</span><span style="color:#d4d4d4;text-decoration:underline;text-underline-offset:2px;text-decoration-thickness:2px"> </span><span style="color:#d4d4d4;text-decoration:underline;text-underline-offset:2px;text-decoration-thickness:2px">[</span><span style="color:#5ecab0;text-decoration:underline;text-underline-offset:2px;text-decoration-thickness:2px">A</span><span style="color:#d4d4d4;text-decoration:underline;text-underline-offset:2px;text-decoration-thickness:2px">]</span><span style="color:#d4d4d4">)</span></div><div style="height:42px;padding-top:2px;box-sizing:border-box;white-space:pre;"><span style="color:#d4d4d4">        </span><span style="color:#5f9fdd">stur</span><span style="color:#d4d4d4">    </span><span style="color:#5ecab0">x0</span><span style="color:#d4d4d4">,</span><span style="color:#d4d4d4"> </span><span style="color:#d4d4d4">[</span><span style="color:#5ecab0">x29</span><span style="color:#d4d4d4">,</span><span style="color:#d4d4d4"> </span><span style="color:#b5cea8">#-8</span><span style="color:#d4d4d4">]</span></div><div style="height:42px;padding-top:2px;box-sizing:border-box;white-space:pre;"><span style="color:#d4d4d4">        </span><span style="color:#5f9fdd">bl</span><span style="color:#d4d4d4">      </span><span style="color:#d4d4d4">(</span><span style="color:#5ecab0;text-decoration:underline;text-underline-offset:2px;text-decoration-thickness:2px">default</span><span style="color:#d4d4d4;text-decoration:underline;text-underline-offset:2px;text-decoration-thickness:2px"> </span><span style="color:#5ecab0;text-decoration:underline;text-underline-offset:2px;text-decoration-thickness:2px">argument</span><span style="color:#d4d4d4;text-decoration:underline;text-underline-offset:2px;text-decoration-thickness:2px"> </span><span style="color:#b5cea8;text-decoration:underline;text-underline-offset:2px;text-decoration-thickness:2px">1</span><span style="color:#d4d4d4;text-decoration:underline;text-underline-offset:2px;text-decoration-thickness:2px"> </span><span style="color:#5ecab0;text-decoration:underline;text-underline-offset:2px;text-decoration-thickness:2px">of</span><span style="color:#d4d4d4;text-decoration:underline;text-underline-offset:2px;text-decoration-thickness:2px"> </span><span style="color:#5ecab0;text-decoration:underline;text-underline-offset:2px;text-decoration-thickness:2px">Swift.print</span><span style="color:#d4d4d4;text-decoration:underline;text-underline-offset:2px;text-decoration-thickness:2px">(</span><span style="color:#5ecab0;text-decoration:underline;text-underline-offset:2px;text-decoration-thickness:2px">_</span><span style="color:#d4d4d4;text-decoration:underline;text-underline-offset:2px;text-decoration-thickness:2px">:</span><span style="color:#d4d4d4;text-decoration:underline;text-underline-offset:2px;text-decoration-thickness:2px"> </span><span style="color:#5ecab0;text-decoration:underline;text-underline-offset:2px;text-decoration-thickness:2px">Any...</span><span style="color:#d4d4d4;text-decoration:underline;text-underline-offset:2px;text-decoration-thickness:2px">,</span><span style="color:#d4d4d4;text-decoration:underline;text-underline-offset:2px;text-decoration-thickness:2px"> </span><span style="color:#5ecab0;text-decoration:underline;text-underline-offset:2px;text-decoration-thickness:2px">separator</span><span style="color:#d4d4d4;text-decoration:underline;text-underline-offset:2px;text-decoration-thickness:2px">:</span><span style="color:#d4d4d4;text-decoration:underline;text-underline-offset:2px;text-decoration-thickness:2px"> </span><span style="color:#5ecab0;text-decoration:underline;text-underline-offset:2px;text-decoration-thickness:2px">Swift.String</span><span style="color:#d4d4d4;text-decoration:underline;text-underline-offset:2px;text-decoration-thickness:2px">,</span><span style="color:#d4d4d4;text-decoration:underline;text-underline-offset:2px;text-decoration-thickness:2px"> </span><span style="color:#5ecab0;text-decoration:underline;text-underline-offset:2px;text-decoration-thickness:2px">terminator</span><span style="color:#d4d4d4;text-decoration:underline;text-underline-offset:2px;text-decoration-thickness:2px">:</span><span style="color:#d4d4d4;text-decoration:underline;text-underline-offset:2px;text-decoration-thickness:2px"> </span><span style="color:#5ecab0;text-decoration:underline;text-underline-offset:2px;text-decoration-thickness:2px">Swift.String</span><span style="color:#d4d4d4;text-decoration:underline;text-underline-offset:2px;text-decoration-thickness:2px">)</span><span style="color:#d4d4d4;text-decoration:underline;text-underline-offset:2px;text-decoration-thickness:2px"> </span><span style="color:#d4d4d4;text-decoration:underline;text-underline-offset:2px;text-decoration-thickness:2px">-</span><span style="color:#d4d4d4;text-decoration:underline;text-underline-offset:2px;text-decoration-thickness:2px">&gt;</span><span style="color:#d4d4d4;text-decoration:underline;text-underline-offset:2px;text-decoration-thickness:2px"> </span><span style="color:#d4d4d4;text-decoration:underline;text-underline-offset:2px;text-decoration-thickness:2px">(</span><span style="color:#d4d4d4;text-decoration:underline;text-underline-offset:2px;text-decoration-thickness:2px">)</span><span style="color:#d4d4d4">)</span></div><div style="height:42px;padding-top:2px;box-sizing:border-box;white-space:pre;"><span style="color:#d4d4d4">        </span><span style="color:#5f9fdd">str</span><span style="color:#d4d4d4">     </span><span style="color:#5ecab0">x0</span><span style="color:#d4d4d4">,</span><span style="color:#d4d4d4"> </span><span style="color:#d4d4d4">[</span><span style="color:#9aa2bd">sp</span><span style="color:#d4d4d4">,</span><span style="color:#d4d4d4"> </span><span style="color:#b5cea8">#16</span><span style="color:#d4d4d4">]</span></div><div style="height:42px;padding-top:2px;box-sizing:border-box;white-space:pre;"><span style="color:#d4d4d4">        </span><span style="color:#5f9fdd">stur</span><span style="color:#d4d4d4">    </span><span style="color:#5ecab0">x1</span><span style="color:#d4d4d4">,</span><span style="color:#d4d4d4"> </span><span style="color:#d4d4d4">[</span><span style="color:#5ecab0">x29</span><span style="color:#d4d4d4">,</span><span style="color:#d4d4d4"> </span><span style="color:#b5cea8">#-16</span><span style="color:#d4d4d4">]</span></div><div style="height:42px;padding-top:2px;box-sizing:border-box;white-space:pre;"><span style="color:#d4d4d4">        </span><span style="color:#5f9fdd">bl</span><span style="color:#d4d4d4">      </span><span style="color:#d4d4d4">(</span><span style="color:#5ecab0;text-decoration:underline;text-underline-offset:2px;text-decoration-thickness:2px">default</span><span style="color:#d4d4d4;text-decoration:underline;text-underline-offset:2px;text-decoration-thickness:2px"> </span><span style="color:#5ecab0;text-decoration:underline;text-underline-offset:2px;text-decoration-thickness:2px">argument</span><span style="color:#d4d4d4;text-decoration:underline;text-underline-offset:2px;text-decoration-thickness:2px"> </span><span style="color:#b5cea8;text-decoration:underline;text-underline-offset:2px;text-decoration-thickness:2px">2</span><span style="color:#d4d4d4;text-decoration:underline;text-underline-offset:2px;text-decoration-thickness:2px"> </span><span style="color:#5ecab0;text-decoration:underline;text-underline-offset:2px;text-decoration-thickness:2px">of</span><span style="color:#d4d4d4;text-decoration:underline;text-underline-offset:2px;text-decoration-thickness:2px"> </span><span style="color:#5ecab0;text-decoration:underline;text-underline-offset:2px;text-decoration-thickness:2px">Swift.print</span><span style="color:#d4d4d4;text-decoration:underline;text-underline-offset:2px;text-decoration-thickness:2px">(</span><span style="color:#5ecab0;text-decoration:underline;text-underline-offset:2px;text-decoration-thickness:2px">_</span><span style="color:#d4d4d4;text-decoration:underline;text-underline-offset:2px;text-decoration-thickness:2px">:</span><span style="color:#d4d4d4;text-decoration:underline;text-underline-offset:2px;text-decoration-thickness:2px"> </span><span style="color:#5ecab0;text-decoration:underline;text-underline-offset:2px;text-decoration-thickness:2px">Any...</span><span style="color:#d4d4d4;text-decoration:underline;text-underline-offset:2px;text-decoration-thickness:2px">,</span><span style="color:#d4d4d4;text-decoration:underline;text-underline-offset:2px;text-decoration-thickness:2px"> </span><span style="color:#5ecab0;text-decoration:underline;text-underline-offset:2px;text-decoration-thickness:2px">separator</span><span style="color:#d4d4d4;text-decoration:underline;text-underline-offset:2px;text-decoration-thickness:2px">:</span><span style="color:#d4d4d4;text-decoration:underline;text-underline-offset:2px;text-decoration-thickness:2px"> </span><span style="color:#5ecab0;text-decoration:underline;text-underline-offset:2px;text-decoration-thickness:2px">Swift.String</span><span style="color:#d4d4d4;text-decoration:underline;text-underline-offset:2px;text-decoration-thickness:2px">,</span><span style="color:#d4d4d4;text-decoration:underline;text-underline-offset:2px;text-decoration-thickness:2px"> </span><span style="color:#5ecab0;text-decoration:underline;text-underline-offset:2px;text-decoration-thickness:2px">terminator</span><span style="color:#d4d4d4;text-decoration:underline;text-underline-offset:2px;text-decoration-thickness:2px">:</span><span style="color:#d4d4d4;text-decoration:underline;text-underline-offset:2px;text-decoration-thickness:2px"> </span><span style="color:#5ecab0;text-decoration:underline;text-underline-offset:2px;text-decoration-thickness:2px">Swift.String</span><span style="color:#d4d4d4;text-decoration:underline;text-underline-offset:2px;text-decoration-thickness:2px">)</span><span style="color:#d4d4d4;text-decoration:underline;text-underline-offset:2px;text-decoration-thickness:2px"> </span><span style="color:#d4d4d4;text-decoration:underline;text-underline-offset:2px;text-decoration-thickness:2px">-</span><span style="color:#d4d4d4;text-decoration:underline;text-underline-offset:2px;text-decoration-thickness:2px">&gt;</span><span style="color:#d4d4d4;text-decoration:underline;text-underline-offset:2px;text-decoration-thickness:2px"> </span><span style="color:#d4d4d4;text-decoration:underline;text-underline-offset:2px;text-decoration-thickness:2px">(</span><span style="color:#d4d4d4;text-decoration:underline;text-underline-offset:2px;text-decoration-thickness:2px">)</span><span style="color:#d4d4d4">)</span></div></div>
<div class="a" style="left:1568px;top:664px;width:4px;height:38px;background:#aeafad;"></div>
<div class="a" style="left:2836px;top:368px;width:160px;height:1380px;background:#1e1e1e;box-shadow:-4px 0 5px -2px rgba(0,0,0,0.7);"></div>
<div class="a" style="left:2844px;top:367px;width:152px;height:432px;overflow:hidden;font-family:'Liberation Mono',monospace;font-size:3.3333px;line-height:4px;white-space:pre;-webkit-text-stroke:0.1px currentColor;"><div style="height:4px;"><span style="color:#5f9fdd">main</span><span style="color:#d4d4d4">:</span></div><div style="height:4px;"><span style="color:#d4d4d4">        </span><span style="color:#5f9fdd">sub</span><span style="color:#d4d4d4">     </span><span style="color:#9aa2bd">sp</span><span style="color:#d4d4d4">,</span><span style="color:#d4d4d4"> </span><span style="color:#9aa2bd">sp</span><span style="color:#d4d4d4">,</span><span style="color:#d4d4d4"> </span><span style="color:#b5cea8">#64</span></div><div style="height:4px;"><span style="color:#d4d4d4">        </span><span style="color:#5f9fdd">stp</span><span style="color:#d4d4d4">     </span><span style="color:#5ecab0">x29</span><span style="color:#d4d4d4">,</span><span style="color:#d4d4d4"> </span><span style="color:#5ecab0">x30</span><span style="color:#d4d4d4">,</span><span style="color:#d4d4d4"> </span><span style="color:#d4d4d4">[</span><span style="color:#9aa2bd">sp</span><span style="color:#d4d4d4">,</span><span style="color:#d4d4d4"> </span><span style="color:#b5cea8">#48</span><span style="color:#d4d4d4">]</span></div><div style="height:4px;"><span style="color:#d4d4d4">        </span><span style="color:#5f9fdd">add</span><span style="color:#d4d4d4">     </span><span style="color:#5ecab0">x29</span><span style="color:#d4d4d4">,</span><span style="color:#d4d4d4"> </span><span style="color:#9aa2bd">sp</span><span style="color:#d4d4d4">,</span><span style="color:#d4d4d4"> </span><span style="color:#b5cea8">#48</span></div><div style="height:4px;"><span style="color:#d4d4d4">        </span><span style="color:#5f9fdd">mov</span><span style="color:#d4d4d4">     </span><span style="color:#5ecab0">w8</span><span style="color:#d4d4d4">,</span><span style="color:#d4d4d4"> </span><span style="color:#b5cea8">#1</span></div><div style="height:4px;"><span style="color:#d4d4d4">        </span><span style="color:#5f9fdd">mov</span><span style="color:#d4d4d4">     </span><span style="color:#5ecab0">w0</span><span style="color:#d4d4d4">,</span><span style="color:#d4d4d4"> </span><span style="color:#5ecab0">w8</span></div><div style="height:4px;"><span style="color:#d4d4d4">        </span><span style="color:#5f9fdd">bl</span><span style="color:#d4d4d4">      </span><span style="color:#d4d4d4">(</span><span style="color:#5ecab0">$ss27_allocateUninitializedArrayySayxG_BptBwlFyp_Tg5</span><span style="color:#d4d4d4">)</span></div><div style="height:4px;"><span style="color:#d4d4d4">        </span><span style="color:#5f9fdd">str</span><span style="color:#d4d4d4">     </span><span style="color:#5ecab0">x0</span><span style="color:#d4d4d4">,</span><span style="color:#d4d4d4"> </span><span style="color:#d4d4d4">[</span><span style="color:#9aa2bd">sp</span><span style="color:#d4d4d4">,</span><span style="color:#d4d4d4"> </span><span style="color:#b5cea8">#8</span><span style="color:#d4d4d4">]</span></div><div style="height:4px;"><span style="color:#d4d4d4">        </span><span style="color:#5f9fdd">str</span><span style="color:#d4d4d4">     </span><span style="color:#5ecab0">x1</span><span style="color:#d4d4d4">,</span><span style="color:#d4d4d4"> </span><span style="color:#d4d4d4">[</span><span style="color:#9aa2bd">sp</span><span style="color:#d4d4d4">]</span></div><div style="height:4px;"><span style="color:#d4d4d4">        </span><span style="color:#5f9fdd">adrp</span><span style="color:#d4d4d4">    </span><span style="color:#5ecab0">x0</span><span style="color:#d4d4d4">,</span><span style="color:#d4d4d4"> </span><span style="color:#ce9178">&quot;.L.str.11.Hello World&quot;</span></div><div style="height:4px;"><span style="color:#d4d4d4">        </span><span style="color:#5f9fdd">add</span><span style="color:#d4d4d4">     </span><span style="color:#5ecab0">x0</span><span style="color:#d4d4d4">,</span><span style="color:#d4d4d4"> </span><span style="color:#5ecab0">x0</span><span style="color:#d4d4d4">,</span><span style="color:#d4d4d4"> </span><span style="color:#d4d4d4">:</span><span style="color:#5ecab0">lo12</span><span style="color:#d4d4d4">:</span><span style="color:#ce9178">&quot;.L.str.11.Hello World&quot;</span></div><div style="height:4px;"><span style="color:#d4d4d4">        </span><span style="color:#5f9fdd">mov</span><span style="color:#d4d4d4">     </span><span style="color:#5ecab0">w8</span><span style="color:#d4d4d4">,</span><span style="color:#d4d4d4"> </span><span style="color:#b5cea8">#11</span></div><div style="height:4px;"><span style="color:#d4d4d4">        </span><span style="color:#5f9fdd">mov</span><span style="color:#d4d4d4">     </span><span style="color:#5ecab0">w1</span><span style="color:#d4d4d4">,</span><span style="color:#d4d4d4"> </span><span style="color:#5ecab0">w8</span></div><div style="height:4px;"><span style="color:#d4d4d4">        </span><span style="color:#5f9fdd">mov</span><span style="color:#d4d4d4">     </span><span style="color:#5ecab0">w8</span><span style="color:#d4d4d4">,</span><span style="color:#d4d4d4"> </span><span style="color:#b5cea8">#1</span></div><div style="height:4px;"><span style="color:#d4d4d4">        </span><span style="color:#5f9fdd">and</span><span style="color:#d4d4d4">     </span><span style="color:#5ecab0">w2</span><span style="color:#d4d4d4">,</span><span style="color:#d4d4d4"> </span><span style="color:#5ecab0">w8</span><span style="color:#d4d4d4">,</span><span style="color:#d4d4d4"> </span><span style="color:#b5cea8">#0x1</span></div><div style="height:4px;"><span style="color:#d4d4d4">        </span><span style="color:#5f9fdd">bl</span><span style="color:#d4d4d4">      </span><span style="color:#d4d4d4">(</span><span style="color:#5ecab0">$sSS21_builtinStringLiteral17utf8CodeUnitCount7isASCIISSBp_BwBi1_tcfC</span><span style="color:#d4d4d4">)</span></div><div style="height:4px;"><span style="color:#d4d4d4">        </span><span style="color:#5f9fdd">ldr</span><span style="color:#d4d4d4">     </span><span style="color:#5ecab0">x8</span><span style="color:#d4d4d4">,</span><span style="color:#d4d4d4"> </span><span style="color:#d4d4d4">[</span><span style="color:#9aa2bd">sp</span><span style="color:#d4d4d4">]</span></div><div style="height:4px;"><span style="color:#d4d4d4">        </span><span style="color:#5f9fdd">mov</span><span style="color:#d4d4d4">     </span><span style="color:#5ecab0">x9</span><span style="color:#d4d4d4">,</span><span style="color:#d4d4d4"> </span><span style="color:#5ecab0">x0</span></div><div style="height:4px;"><span style="color:#d4d4d4">        </span><span style="color:#5f9fdd">ldr</span><span style="color:#d4d4d4">     </span><span style="color:#5ecab0">x0</span><span style="color:#d4d4d4">,</span><span style="color:#d4d4d4"> </span><span style="color:#d4d4d4">[</span><span style="color:#9aa2bd">sp</span><span style="color:#d4d4d4">,</span><span style="color:#d4d4d4"> </span><span style="color:#b5cea8">#8</span><span style="color:#d4d4d4">]</span></div><div style="height:4px;"><span style="color:#d4d4d4">        </span><span style="color:#5f9fdd">adrp</span><span style="color:#d4d4d4">    </span><span style="color:#5ecab0">x10</span><span style="color:#d4d4d4">,</span><span style="color:#d4d4d4"> </span><span style="color:#d4d4d4">:</span><span style="color:#5ecab0">got</span><span style="color:#d4d4d4">:</span><span style="color:#d4d4d4">(</span><span style="color:#5ecab0">$sSSN</span><span style="color:#d4d4d4">)</span></div><div style="height:4px;"><span style="color:#d4d4d4">        </span><span style="color:#5f9fdd">ldr</span><span style="color:#d4d4d4">     </span><span style="color:#5ecab0">x10</span><span style="color:#d4d4d4">,</span><span style="color:#d4d4d4"> </span><span style="color:#d4d4d4">[</span><span style="color:#5ecab0">x10</span><span style="color:#d4d4d4">,</span><span style="color:#d4d4d4"> </span><span style="color:#d4d4d4">:</span><span style="color:#5ecab0">got_lo12</span><span style="color:#d4d4d4">:</span><span style="color:#d4d4d4">(</span><span style="color:#5ecab0">$sSSN</span><span style="color:#d4d4d4">)</span><span style="color:#d4d4d4">]</span></div><div style="height:4px;"><span style="color:#d4d4d4">        </span><span style="color:#5f9fdd">str</span><span style="color:#d4d4d4">     </span><span style="color:#5ecab0">x10</span><span style="color:#d4d4d4">,</span><span style="color:#d4d4d4"> </span><span style="color:#d4d4d4">[</span><span style="color:#5ecab0">x8</span><span style="color:#d4d4d4">,</span><span style="color:#d4d4d4"> </span><span style="color:#b5cea8">#24</span><span style="color:#d4d4d4">]</span></div><div style="height:4px;"><span style="color:#d4d4d4">        </span><span style="color:#5f9fdd">str</span><span style="color:#d4d4d4">     </span><span style="color:#5ecab0">x9</span><span style="color:#d4d4d4">,</span><span style="color:#d4d4d4"> </span><span style="color:#d4d4d4">[</span><span style="color:#5ecab0">x8</span><span style="color:#d4d4d4">]</span></div><div style="height:4px;"><span style="color:#d4d4d4">        </span><span style="color:#5f9fdd">str</span><span style="color:#d4d4d4">     </span><span style="color:#5ecab0">x1</span><span style="color:#d4d4d4">,</span><span style="color:#d4d4d4"> </span><span style="color:#d4d4d4">[</span><span style="color:#5ecab0">x8</span><span style="color:#d4d4d4">,</span><span style="color:#d4d4d4"> </span><span style="color:#b5cea8">#8</span><span style="color:#d4d4d4">]</span></div><div style="height:4px;"><span style="color:#d4d4d4">        </span><span style="color:#5f9fdd">adrp</span><span style="color:#d4d4d4">    </span><span style="color:#5ecab0">x8</span><span style="color:#d4d4d4">,</span><span style="color:#d4d4d4"> </span><span style="color:#d4d4d4">:</span><span style="color:#5ecab0">got</span><span style="color:#d4d4d4">:</span><span style="color:#d4d4d4">(</span><span style="color:#5ecab0">$sypN</span><span style="color:#d4d4d4">)</span></div><div style="height:4px;"><span style="color:#d4d4d4">        </span><span style="color:#5f9fdd">ldr</span><span style="color:#d4d4d4">     </span><span style="color:#5ecab0">x8</span><span style="color:#d4d4d4">,</span><span style="color:#d4d4d4"> </span><span style="color:#d4d4d4">[</span><span style="color:#5ecab0">x8</span><span style="color:#d4d4d4">,</span><span style="color:#d4d4d4"> </span><span style="color:#d4d4d4">:</span><span style="color:#5ecab0">got_lo12</span><span style="color:#d4d4d4">:</span><span style="color:#d4d4d4">(</span><span style="color:#5ecab0">$sypN</span><span style="color:#d4d4d4">)</span><span style="color:#d4d4d4">]</span></div><div style="height:4px;"><span style="color:#d4d4d4">        </span><span style="color:#5f9fdd">add</span><span style="color:#d4d4d4">     </span><span style="color:#5ecab0">x1</span><span style="color:#d4d4d4">,</span><span style="color:#d4d4d4"> </span><span style="color:#5ecab0">x8</span><span style="color:#d4d4d4">,</span><span style="color:#d4d4d4"> </span><span style="color:#b5cea8">#8</span></div><div style="height:4px;"><span style="color:#d4d4d4">        </span><span style="color:#5f9fdd">bl</span><span style="color:#d4d4d4">      </span><span style="color:#d4d4d4">(</span><span style="color:#5ecab0">Swift._finalizeUninitializedArray</span><span style="color:#d4d4d4">&lt;</span><span style="color:#5ecab0">A</span><span style="color:#d4d4d4">&gt;</span><span style="color:#d4d4d4">(</span><span style="color:#5ecab0">__owned</span><span style="color:#d4d4d4"> </span><span style="color:#d4d4d4">[</span><span style="color:#5ecab0">A</span><span style="color:#d4d4d4">]</span><span style="color:#d4d4d4">)</span><span style="color:#d4d4d4"> </span><span style="color:#d4d4d4">-</span><span style="color:#d4d4d4">&gt;</span><span style="color:#d4d4d4"> </span><span style="color:#d4d4d4">[</span><span style="color:#5ecab0">A</span><span style="color:#d4d4d4">]</span><span style="color:#d4d4d4">)</span></div><div style="height:4px;"><span style="color:#d4d4d4">        </span><span style="color:#5f9fdd">stur</span><span style="color:#d4d4d4">    </span><span style="color:#5ecab0">x0</span><span style="color:#d4d4d4">,</span><span style="color:#d4d4d4"> </span><span style="color:#d4d4d4">[</span><span style="color:#5ecab0">x29</span><span style="color:#d4d4d4">,</span><span style="color:#d4d4d4"> </span><span style="color:#b5cea8">#-8</span><span style="color:#d4d4d4">]</span></div><div style="height:4px;"><span style="color:#d4d4d4">        </span><span style="color:#5f9fdd">bl</span><span style="color:#d4d4d4">      </span><span style="color:#d4d4d4">(</span><span style="color:#5ecab0">default</span><span style="color:#d4d4d4"> </span><span style="color:#5ecab0">argument</span><span style="color:#d4d4d4"> </span><span style="color:#b5cea8">1</span><span style="color:#d4d4d4"> </span><span style="color:#5ecab0">of</span><span style="color:#d4d4d4"> </span><span style="color:#5ecab0">Swift.print</span><span style="color:#d4d4d4">(</span><span style="color:#5ecab0">_</span><span style="color:#d4d4d4">:</span><span style="color:#d4d4d4"> </span><span style="color:#5ecab0">Any...</span><span style="color:#d4d4d4">,</span><span style="color:#d4d4d4"> </span><span style="color:#5ecab0">separator</span><span style="color:#d4d4d4">:</span><span style="color:#d4d4d4"> </span><span style="color:#5ecab0">Swift.String</span><span style="color:#d4d4d4">,</span><span style="color:#d4d4d4"> </span><span style="color:#5ecab0">terminator</span><span style="color:#d4d4d4">:</span><span style="color:#d4d4d4"> </span><span style="color:#5ecab0">Swift.String</span><span style="color:#d4d4d4">)</span><span style="color:#d4d4d4"> </span><span style="color:#d4d4d4">-</span><span style="color:#d4d4d4">&gt;</span><span style="color:#d4d4d4"> </span><span style="color:#d4d4d4">(</span><span style="color:#d4d4d4">)</span><span style="color:#d4d4d4">)</span></div><div style="height:4px;"><span style="color:#d4d4d4">        </span><span style="color:#5f9fdd">str</span><span style="color:#d4d4d4">     </span><span style="color:#5ecab0">x0</span><span style="color:#d4d4d4">,</span><span style="color:#d4d4d4"> </span><span style="color:#d4d4d4">[</span><span style="color:#9aa2bd">sp</span><span style="color:#d4d4d4">,</span><span style="color:#d4d4d4"> </span><span style="color:#b5cea8">#16</span><span style="color:#d4d4d4">]</span></div><div style="height:4px;"><span style="color:#d4d4d4">        </span><span style="color:#5f9fdd">stur</span><span style="color:#d4d4d4">    </span><span style="color:#5ecab0">x1</span><span style="color:#d4d4d4">,</span><span style="color:#d4d4d4"> </span><span style="color:#d4d4d4">[</span><span style="color:#5ecab0">x29</span><span style="color:#d4d4d4">,</span><span style="color:#d4d4d4"> </span><span style="color:#b5cea8">#-16</span><span style="color:#d4d4d4">]</span></div><div style="height:4px;"><span style="color:#d4d4d4">        </span><span style="color:#5f9fdd">bl</span><span style="color:#d4d4d4">      </span><span style="color:#d4d4d4">(</span><span style="color:#5ecab0">default</span><span style="color:#d4d4d4"> </span><span style="color:#5ecab0">argument</span><span style="color:#d4d4d4"> </span><span style="color:#b5cea8">2</span><span style="color:#d4d4d4"> </span><span style="color:#5ecab0">of</span><span style="color:#d4d4d4"> </span><span style="color:#5ecab0">Swift.print</span><span style="color:#d4d4d4">(</span><span style="color:#5ecab0">_</span><span style="color:#d4d4d4">:</span><span style="color:#d4d4d4"> </span><span style="color:#5ecab0">Any...</span><span style="color:#d4d4d4">,</span><span style="color:#d4d4d4"> </span><span style="color:#5ecab0">separator</span><span style="color:#d4d4d4">:</span><span style="color:#d4d4d4"> </span><span style="color:#5ecab0">Swift.String</span><span style="color:#d4d4d4">,</span><span style="color:#d4d4d4"> </span><span style="color:#5ecab0">terminator</span><span style="color:#d4d4d4">:</span><span style="color:#d4d4d4"> </span><span style="color:#5ecab0">Swift.String</span><span style="color:#d4d4d4">)</span><span style="color:#d4d4d4"> </span><span style="color:#d4d4d4">-</span><span style="color:#d4d4d4">&gt;</span><span style="color:#d4d4d4"> </span><span style="color:#d4d4d4">(</span><span style="color:#d4d4d4">)</span><span style="color:#d4d4d4">)</span></div><div style="height:4px;"><span style="color:#d4d4d4">        </span><span style="color:#5f9fdd">ldur</span><span style="color:#d4d4d4">    </span><span style="color:#5ecab0">x2</span><span style="color:#d4d4d4">,</span><span style="color:#d4d4d4"> </span><span style="color:#d4d4d4">[</span><span style="color:#5ecab0">x29</span><span style="color:#d4d4d4">,</span><span style="color:#d4d4d4"> </span><span style="color:#b5cea8">#-16</span><span style="color:#d4d4d4">]</span></div><div style="height:4px;"><span style="color:#d4d4d4">        </span><span style="color:#5f9fdd">mov</span><span style="color:#d4d4d4">     </span><span style="color:#5ecab0">x3</span><span style="color:#d4d4d4">,</span><span style="color:#d4d4d4"> </span><span style="color:#5ecab0">x8</span></div><div style="height:4px;"><span style="color:#d4d4d4">        </span><span style="color:#5f9fdd">ldur</span><span style="color:#d4d4d4">    </span><span style="color:#5ecab0">x8</span><span style="color:#d4d4d4">,</span><span style="color:#d4d4d4"> </span><span style="color:#d4d4d4">[</span><span style="color:#5ecab0">x29</span><span style="color:#d4d4d4">,</span><span style="color:#d4d4d4"> </span><span style="color:#b5cea8">#-8</span><span style="color:#d4d4d4">]</span></div><div style="height:4px;"><span style="color:#d4d4d4">        </span><span style="color:#5f9fdd">mov</span><span style="color:#d4d4d4">     </span><span style="color:#5ecab0">x4</span><span style="color:#d4d4d4">,</span><span style="color:#d4d4d4"> </span><span style="color:#5ecab0">x1</span></div><div style="height:4px;"><span style="color:#d4d4d4">        </span><span style="color:#5f9fdd">ldr</span><span style="color:#d4d4d4">     </span><span style="color:#5ecab0">x1</span><span style="color:#d4d4d4">,</span><span style="color:#d4d4d4"> </span><span style="color:#d4d4d4">[</span><span style="color:#9aa2bd">sp</span><span style="color:#d4d4d4">,</span><span style="color:#d4d4d4"> </span><span style="color:#b5cea8">#16</span><span style="color:#d4d4d4">]</span></div><div style="height:4px;"><span style="color:#d4d4d4">        </span><span style="color:#5f9fdd">str</span><span style="color:#d4d4d4">     </span><span style="color:#5ecab0">x4</span><span style="color:#d4d4d4">,</span><span style="color:#d4d4d4"> </span><span style="color:#d4d4d4">[</span><span style="color:#9aa2bd">sp</span><span style="color:#d4d4d4">,</span><span style="color:#d4d4d4"> </span><span style="color:#b5cea8">#24</span><span style="color:#d4d4d4">]</span></div><div style="height:4px;"><span style="color:#d4d4d4">        </span><span style="color:#5f9fdd">bl</span><span style="color:#d4d4d4">      </span><span style="color:#d4d4d4">(</span><span style="color:#5ecab0">$ss5print_9separator10terminatoryypd_SStF</span><span style="color:#d4d4d4">)</span></div><div style="height:4px;"><span style="color:#d4d4d4">        </span><span style="color:#5f9fdd">ldr</span><span style="color:#d4d4d4">     </span><span style="color:#5ecab0">x0</span><span style="color:#d4d4d4">,</span><span style="color:#d4d4d4"> </span><span style="color:#d4d4d4">[</span><span style="color:#9aa2bd">sp</span><span style="color:#d4d4d4">,</span><span style="color:#d4d4d4"> </span><span style="color:#b5cea8">#24</span><span style="color:#d4d4d4">]</span></div><div style="height:4px;"><span style="color:#d4d4d4">        </span><span style="color:#5f9fdd">bl</span><span style="color:#d4d4d4">      </span><span style="color:#5ecab0">swift_bridgeObjectRelease</span></div><div style="height:4px;"><span style="color:#d4d4d4">        </span><span style="color:#5f9fdd">ldur</span><span style="color:#d4d4d4">    </span><span style="color:#5ecab0">x0</span><span style="color:#d4d4d4">,</span><span style="color:#d4d4d4"> </span><span style="color:#d4d4d4">[</span><span style="color:#5ecab0">x29</span><span style="color:#d4d4d4">,</span><span style="color:#d4d4d4"> </span><span style="color:#b5cea8">#-16</span><span style="color:#d4d4d4">]</span></div><div style="height:4px;"><span style="color:#d4d4d4">        </span><span style="color:#5f9fdd">bl</span><span style="color:#d4d4d4">      </span><span style="color:#5ecab0">swift_bridgeObjectRelease</span></div><div style="height:4px;"><span style="color:#d4d4d4">        </span><span style="color:#5f9fdd">ldur</span><span style="color:#d4d4d4">    </span><span style="color:#5ecab0">x0</span><span style="color:#d4d4d4">,</span><span style="color:#d4d4d4"> </span><span style="color:#d4d4d4">[</span><span style="color:#5ecab0">x29</span><span style="color:#d4d4d4">,</span><span style="color:#d4d4d4"> </span><span style="color:#b5cea8">#-8</span><span style="color:#d4d4d4">]</span></div><div style="height:4px;"><span style="color:#d4d4d4">        </span><span style="color:#5f9fdd">bl</span><span style="color:#d4d4d4">      </span><span style="color:#5ecab0">swift_release</span></div><div style="height:4px;"><span style="color:#d4d4d4">        </span><span style="color:#5f9fdd">mov</span><span style="color:#d4d4d4">     </span><span style="color:#5ecab0">w0</span><span style="color:#d4d4d4">,</span><span style="color:#d4d4d4"> </span><span style="color:#5ecab0">wzr</span></div><div style="height:4px;"><span style="color:#d4d4d4">        </span><span style="color:#5f9fdd">ldp</span><span style="color:#d4d4d4">     </span><span style="color:#5ecab0">x29</span><span style="color:#d4d4d4">,</span><span style="color:#d4d4d4"> </span><span style="color:#5ecab0">x30</span><span style="color:#d4d4d4">,</span><span style="color:#d4d4d4"> </span><span style="color:#d4d4d4">[</span><span style="color:#9aa2bd">sp</span><span style="color:#d4d4d4">,</span><span style="color:#d4d4d4"> </span><span style="color:#b5cea8">#48</span><span style="color:#d4d4d4">]</span></div><div style="height:4px;"><span style="color:#d4d4d4">        </span><span style="color:#5f9fdd">add</span><span style="color:#d4d4d4">     </span><span style="color:#9aa2bd">sp</span><span style="color:#d4d4d4">,</span><span style="color:#d4d4d4"> </span><span style="color:#9aa2bd">sp</span><span style="color:#d4d4d4">,</span><span style="color:#d4d4d4"> </span><span style="color:#b5cea8">#64</span></div><div style="height:4px;"><span style="color:#d4d4d4">        </span><span style="color:#5f9fdd">ret</span><span style="color:#d4d4d4"></span></div><div style="height:4px;"></div><div style="height:4px;"><span style="color:#5ecab0">Swift._finalizeUninitializedArray</span><span style="color:#d4d4d4">&lt;</span><span style="color:#5ecab0">A</span><span style="color:#d4d4d4">&gt;</span><span style="color:#d4d4d4">(</span><span style="color:#5ecab0">__owned</span><span style="color:#d4d4d4"> </span><span style="color:#d4d4d4">[</span><span style="color:#5ecab0">A</span><span style="color:#d4d4d4">]</span><span style="color:#d4d4d4">)</span><span style="color:#d4d4d4"> </span><span style="color:#d4d4d4">-</span><span style="color:#d4d4d4">&gt;</span><span style="color:#d4d4d4"> </span><span style="color:#d4d4d4">[</span><span style="color:#5ecab0">A</span><span style="color:#d4d4d4">]</span><span style="color:#d4d4d4">:</span></div><div style="height:4px;"><span style="color:#d4d4d4">        </span><span style="color:#5f9fdd">sub</span><span style="color:#d4d4d4">     </span><span style="color:#9aa2bd">sp</span><span style="color:#d4d4d4">,</span><span style="color:#d4d4d4"> </span><span style="color:#9aa2bd">sp</span><span style="color:#d4d4d4">,</span><span style="color:#d4d4d4"> </span><span style="color:#b5cea8">#48</span></div><div style="height:4px;"><span style="color:#d4d4d4">        </span><span style="color:#5f9fdd">stp</span><span style="color:#d4d4d4">     </span><span style="color:#5ecab0">x29</span><span style="color:#d4d4d4">,</span><span style="color:#d4d4d4"> </span><span style="color:#5ecab0">x30</span><span style="color:#d4d4d4">,</span><span style="color:#d4d4d4"> </span><span style="color:#d4d4d4">[</span><span style="color:#9aa2bd">sp</span><span style="color:#d4d4d4">,</span><span style="color:#d4d4d4"> </span><span style="color:#b5cea8">#32</span><span style="color:#d4d4d4">]</span></div><div style="height:4px;"><span style="color:#d4d4d4">        </span><span style="color:#5f9fdd">str</span><span style="color:#d4d4d4">     </span><span style="color:#5ecab0">x20</span><span style="color:#d4d4d4">,</span><span style="color:#d4d4d4"> </span><span style="color:#d4d4d4">[</span><span style="color:#9aa2bd">sp</span><span style="color:#d4d4d4">,</span><span style="color:#d4d4d4"> </span><span style="color:#b5cea8">#32</span><span style="color:#d4d4d4">]</span></div><div style="height:4px;"><span style="color:#d4d4d4">        </span><span style="color:#5f9fdd">add</span><span style="color:#d4d4d4">     </span><span style="color:#5ecab0">x29</span><span style="color:#d4d4d4">,</span><span style="color:#d4d4d4"> </span><span style="color:#9aa2bd">sp</span><span style="color:#d4d4d4">,</span><span style="color:#d4d4d4"> </span><span style="color:#b5cea8">#32</span></div><div style="height:4px;"><span style="color:#d4d4d4">        </span><span style="color:#5f9fdd">mov</span><span style="color:#d4d4d4">     </span><span style="color:#5ecab0">x8</span><span style="color:#d4d4d4">,</span><span style="color:#d4d4d4"> </span><span style="color:#5ecab0">x1</span></div><div style="height:4px;"><span style="color:#d4d4d4">        </span><span style="color:#5f9fdd">str</span><span style="color:#d4d4d4">     </span><span style="color:#5ecab0">x8</span><span style="color:#d4d4d4">,</span><span style="color:#d4d4d4"> </span><span style="color:#d4d4d4">[</span><span style="color:#9aa2bd">sp</span><span style="color:#d4d4d4">,</span><span style="color:#d4d4d4"> </span><span style="color:#b5cea8">#8</span><span style="color:#d4d4d4">]</span></div><div style="height:4px;"><span style="color:#d4d4d4">        </span><span style="color:#5f9fdd">mov</span><span style="color:#d4d4d4">     </span><span style="color:#5ecab0">x20</span><span style="color:#d4d4d4">,</span><span style="color:#d4d4d4"> </span><span style="color:#9aa2bd">sp</span></div><div style="height:4px;"><span style="color:#d4d4d4">        </span><span style="color:#5f9fdd">str</span><span style="color:#d4d4d4">     </span><span style="color:#5ecab0">x0</span><span style="color:#d4d4d4">,</span><span style="color:#d4d4d4"> </span><span style="color:#d4d4d4">[</span><span style="color:#9aa2bd">sp</span><span style="color:#d4d4d4">]</span></div><div style="height:4px;"><span style="color:#d4d4d4">        </span><span style="color:#5f9fdd">mov</span><span style="color:#d4d4d4">     </span><span style="color:#5ecab0">x0</span><span style="color:#d4d4d4">,</span><span style="color:#d4d4d4"> </span><span style="color:#5ecab0">xzr</span></div><div style="height:4px;"><span style="color:#d4d4d4">        </span><span style="color:#5f9fdd">bl</span><span style="color:#d4d4d4">      </span><span style="color:#d4d4d4">(</span><span style="color:#5ecab0">$sSaMa</span><span style="color:#d4d4d4">)</span></div><div style="height:4px;"><span style="color:#d4d4d4">        </span><span style="color:#5f9fdd">bl</span><span style="color:#d4d4d4">      </span><span style="color:#d4d4d4">(</span><span style="color:#5ecab0">Swift.Array._endMutation</span><span style="color:#d4d4d4">(</span><span style="color:#d4d4d4">)</span><span style="color:#d4d4d4"> </span><span style="color:#d4d4d4">-</span><span style="color:#d4d4d4">&gt;</span><span style="color:#d4d4d4"> </span><span style="color:#d4d4d4">(</span><span style="color:#d4d4d4">)</span><span style="color:#d4d4d4">)</span></div><div style="height:4px;"><span style="color:#d4d4d4">        </span><span style="color:#5f9fdd">ldr</span><span style="color:#d4d4d4">     </span><span style="color:#5ecab0">x0</span><span style="color:#d4d4d4">,</span><span style="color:#d4d4d4"> </span><span style="color:#d4d4d4">[</span><span style="color:#9aa2bd">sp</span><span style="color:#d4d4d4">]</span></div><div style="height:4px;"><span style="color:#d4d4d4">        </span><span style="color:#5f9fdd">ldr</span><span style="color:#d4d4d4">     </span><span style="color:#5ecab0">x20</span><span style="color:#d4d4d4">,</span><span style="color:#d4d4d4"> </span><span style="color:#d4d4d4">[</span><span style="color:#9aa2bd">sp</span><span style="color:#d4d4d4">,</span><span style="color:#d4d4d4"> </span><span style="color:#b5cea8">#32</span><span style="color:#d4d4d4">]</span></div><div style="height:4px;"><span style="color:#d4d4d4">        </span><span style="color:#5f9fdd">ldp</span><span style="color:#d4d4d4">     </span><span style="color:#5ecab0">x29</span><span style="color:#d4d4d4">,</span><span style="color:#d4d4d4"> </span><span style="color:#5ecab0">x30</span><span style="color:#d4d4d4">,</span><span style="color:#d4d4d4"> </span><span style="color:#d4d4d4">[</span><span style="color:#9aa2bd">sp</span><span style="color:#d4d4d4">,</span><span style="color:#d4d4d4"> </span><span style="color:#b5cea8">#32</span><span style="color:#d4d4d4">]</span></div><div style="height:4px;"><span style="color:#d4d4d4">        </span><span style="color:#5f9fdd">add</span><span style="color:#d4d4d4">     </span><span style="color:#9aa2bd">sp</span><span style="color:#d4d4d4">,</span><span style="color:#d4d4d4"> </span><span style="color:#9aa2bd">sp</span><span style="color:#d4d4d4">,</span><span style="color:#d4d4d4"> </span><span style="color:#b5cea8">#48</span></div><div style="height:4px;"><span style="color:#d4d4d4">        </span><span style="color:#5f9fdd">ret</span><span style="color:#d4d4d4"></span></div><div style="height:4px;"></div><div style="height:4px;"><span style="color:#5ecab0">default</span><span style="color:#d4d4d4"> </span><span style="color:#5ecab0">argument</span><span style="color:#d4d4d4"> </span><span style="color:#b5cea8">1</span><span style="color:#d4d4d4"> </span><span style="color:#5ecab0">of</span><span style="color:#d4d4d4"> </span><span style="color:#5ecab0">Swift.print</span><span style="color:#d4d4d4">(</span><span style="color:#5ecab0">_</span><span style="color:#d4d4d4">:</span><span style="color:#d4d4d4"> </span><span style="color:#5ecab0">Any...</span><span style="color:#d4d4d4">,</span><span style="color:#d4d4d4"> </span><span style="color:#5ecab0">separator</span><span style="color:#d4d4d4">:</span><span style="color:#d4d4d4"> </span><span style="color:#5ecab0">Swift.String</span><span style="color:#d4d4d4">,</span><span style="color:#d4d4d4"> </span><span style="color:#5ecab0">terminator</span><span style="color:#d4d4d4">:</span><span style="color:#d4d4d4"> </span><span style="color:#5ecab0">Swift.String</span><span style="color:#d4d4d4">)</span><span style="color:#d4d4d4"> </span><span style="color:#d4d4d4">-</span><span style="color:#d4d4d4">&gt;</span><span style="color:#d4d4d4"> </span><span style="color:#d4d4d4">(</span><span style="color:#d4d4d4">)</span><span style="color:#d4d4d4">:</span></div><div style="height:4px;"><span style="color:#d4d4d4">        </span><span style="color:#5f9fdd">stp</span><span style="color:#d4d4d4">     </span><span style="color:#5ecab0">x29</span><span style="color:#d4d4d4">,</span><span style="color:#d4d4d4"> </span><span style="color:#5ecab0">x30</span><span style="color:#d4d4d4">,</span><span style="color:#d4d4d4"> </span><span style="color:#d4d4d4">[</span><span style="color:#9aa2bd">sp</span><span style="color:#d4d4d4">,</span><span style="color:#d4d4d4"> </span><span style="color:#b5cea8">#-16</span><span style="color:#d4d4d4">]</span><span style="color:#d4d4d4">!</span></div><div style="height:4px;"><span style="color:#d4d4d4">        </span><span style="color:#5f9fdd">mov</span><span style="color:#d4d4d4">     </span><span style="color:#5ecab0">x29</span><span style="color:#d4d4d4">,</span><span style="color:#d4d4d4"> </span><span style="color:#9aa2bd">sp</span></div><div style="height:4px;"><span style="color:#d4d4d4">        </span><span style="color:#5f9fdd">adrp</span><span style="color:#d4d4d4">    </span><span style="color:#5ecab0">x0</span><span style="color:#d4d4d4">,</span><span style="color:#d4d4d4"> </span><span style="color:#ce9178">&quot;.L.str.1. &quot;</span></div><div style="height:4px;"><span style="color:#d4d4d4">        </span><span style="color:#5f9fdd">add</span><span style="color:#d4d4d4">     </span><span style="color:#5ecab0">x0</span><span style="color:#d4d4d4">,</span><span style="color:#d4d4d4"> </span><span style="color:#5ecab0">x0</span><span style="color:#d4d4d4">,</span><span style="color:#d4d4d4"> </span><span style="color:#d4d4d4">:</span><span style="color:#5ecab0">lo12</span><span style="color:#d4d4d4">:</span><span style="color:#ce9178">&quot;.L.str.1. &quot;</span></div><div style="height:4px;"><span style="color:#d4d4d4">        </span><span style="color:#5f9fdd">mov</span><span style="color:#d4d4d4">     </span><span style="color:#5ecab0">w8</span><span style="color:#d4d4d4">,</span><span style="color:#d4d4d4"> </span><span style="color:#b5cea8">#1</span></div><div style="height:4px;"><span style="color:#d4d4d4">        </span><span style="color:#5f9fdd">mov</span><span style="color:#d4d4d4">     </span><span style="color:#5ecab0">x1</span><span style="color:#d4d4d4">,</span><span style="color:#d4d4d4"> </span><span style="color:#5ecab0">x8</span></div><div style="height:4px;"><span style="color:#d4d4d4">        </span><span style="color:#5f9fdd">mov</span><span style="color:#d4d4d4">     </span><span style="color:#5ecab0">w8</span><span style="color:#d4d4d4">,</span><span style="color:#d4d4d4"> </span><span style="color:#b5cea8">#1</span></div><div style="height:4px;"><span style="color:#d4d4d4">        </span><span style="color:#5f9fdd">and</span><span style="color:#d4d4d4">     </span><span style="color:#5ecab0">w2</span><span style="color:#d4d4d4">,</span><span style="color:#d4d4d4"> </span><span style="color:#5ecab0">w8</span><span style="color:#d4d4d4">,</span><span style="color:#d4d4d4"> </span><span style="color:#b5cea8">#0x1</span></div><div style="height:4px;"><span style="color:#d4d4d4">        </span><span style="color:#5f9fdd">bl</span><span style="color:#d4d4d4">      </span><span style="color:#d4d4d4">(</span><span style="color:#5ecab0">$sSS21_builtinStringLiteral17utf8CodeUnitCount7isASCIISSBp_BwBi1_tcfC</span><span style="color:#d4d4d4">)</span></div><div style="height:4px;"><span style="color:#d4d4d4">        </span><span style="color:#5f9fdd">ldp</span><span style="color:#d4d4d4">     </span><span style="color:#5ecab0">x29</span><span style="color:#d4d4d4">,</span><span style="color:#d4d4d4"> </span><span style="color:#5ecab0">x30</span><span style="color:#d4d4d4">,</span><span style="color:#d4d4d4"> </span><span style="color:#d4d4d4">[</span><span style="color:#9aa2bd">sp</span><span style="color:#d4d4d4">]</span><span style="color:#d4d4d4">,</span><span style="color:#d4d4d4"> </span><span style="color:#b5cea8">#16</span></div><div style="height:4px;"><span style="color:#d4d4d4">        </span><span style="color:#5f9fdd">ret</span><span style="color:#d4d4d4"></span></div><div style="height:4px;"></div><div style="height:4px;"><span style="color:#5ecab0">default</span><span style="color:#d4d4d4"> </span><span style="color:#5ecab0">argument</span><span style="color:#d4d4d4"> </span><span style="color:#b5cea8">2</span><span style="color:#d4d4d4"> </span><span style="color:#5ecab0">of</span><span style="color:#d4d4d4"> </span><span style="color:#5ecab0">Swift.print</span><span style="color:#d4d4d4">(</span><span style="color:#5ecab0">_</span><span style="color:#d4d4d4">:</span><span style="color:#d4d4d4"> </span><span style="color:#5ecab0">Any...</span><span style="color:#d4d4d4">,</span><span style="color:#d4d4d4"> </span><span style="color:#5ecab0">separator</span><span style="color:#d4d4d4">:</span><span style="color:#d4d4d4"> </span><span style="color:#5ecab0">Swift.String</span><span style="color:#d4d4d4">,</span><span style="color:#d4d4d4"> </span><span style="color:#5ecab0">terminator</span><span style="color:#d4d4d4">:</span><span style="color:#d4d4d4"> </span><span style="color:#5ecab0">Swift.String</span><span style="color:#d4d4d4">)</span><span style="color:#d4d4d4"> </span><span style="color:#d4d4d4">-</span><span style="color:#d4d4d4">&gt;</span><span style="color:#d4d4d4"> </span><span style="color:#d4d4d4">(</span><span style="color:#d4d4d4">)</span><span style="color:#d4d4d4">:</span></div><div style="height:4px;"><span style="color:#d4d4d4">        </span><span style="color:#5f9fdd">stp</span><span style="color:#d4d4d4">     </span><span style="color:#5ecab0">x29</span><span style="color:#d4d4d4">,</span><span style="color:#d4d4d4"> </span><span style="color:#5ecab0">x30</span><span style="color:#d4d4d4">,</span><span style="color:#d4d4d4"> </span><span style="color:#d4d4d4">[</span><span style="color:#9aa2bd">sp</span><span style="color:#d4d4d4">,</span><span style="color:#d4d4d4"> </span><span style="color:#b5cea8">#-16</span><span style="color:#d4d4d4">]</span><span style="color:#d4d4d4">!</span></div><div style="height:4px;"><span style="color:#d4d4d4">        </span><span style="color:#5f9fdd">mov</span><span style="color:#d4d4d4">     </span><span style="color:#5ecab0">x29</span><span style="color:#d4d4d4">,</span><span style="color:#d4d4d4"> </span><span style="color:#9aa2bd">sp</span></div><div style="height:4px;"><span style="color:#d4d4d4">        </span><span style="color:#5f9fdd">adrp</span><span style="color:#d4d4d4">    </span><span style="color:#5ecab0">x0</span><span style="color:#d4d4d4">,</span><span style="color:#d4d4d4"> </span><span style="color:#ce9178">&quot;.L.str.1.\n&quot;</span></div><div style="height:4px;"><span style="color:#d4d4d4">        </span><span style="color:#5f9fdd">add</span><span style="color:#d4d4d4">     </span><span style="color:#5ecab0">x0</span><span style="color:#d4d4d4">,</span><span style="color:#d4d4d4"> </span><span style="color:#5ecab0">x0</span><span style="color:#d4d4d4">,</span><span style="color:#d4d4d4"> </span><span style="color:#d4d4d4">:</span><span style="color:#5ecab0">lo12</span><span style="color:#d4d4d4">:</span><span style="color:#ce9178">&quot;.L.str.1.\n&quot;</span></div><div style="height:4px;"><span style="color:#d4d4d4">        </span><span style="color:#5f9fdd">mov</span><span style="color:#d4d4d4">     </span><span style="color:#5ecab0">w8</span><span style="color:#d4d4d4">,</span><span style="color:#d4d4d4"> </span><span style="color:#b5cea8">#1</span></div><div style="height:4px;"><span style="color:#d4d4d4">        </span><span style="color:#5f9fdd">mov</span><span style="color:#d4d4d4">     </span><span style="color:#5ecab0">x1</span><span style="color:#d4d4d4">,</span><span style="color:#d4d4d4"> </span><span style="color:#5ecab0">x8</span></div><div style="height:4px;"><span style="color:#d4d4d4">        </span><span style="color:#5f9fdd">mov</span><span style="color:#d4d4d4">     </span><span style="color:#5ecab0">w8</span><span style="color:#d4d4d4">,</span><span style="color:#d4d4d4"> </span><span style="color:#b5cea8">#1</span></div><div style="height:4px;"><span style="color:#d4d4d4">        </span><span style="color:#5f9fdd">and</span><span style="color:#d4d4d4">     </span><span style="color:#5ecab0">w2</span><span style="color:#d4d4d4">,</span><span style="color:#d4d4d4"> </span><span style="color:#5ecab0">w8</span><span style="color:#d4d4d4">,</span><span style="color:#d4d4d4"> </span><span style="color:#b5cea8">#0x1</span></div><div style="height:4px;"><span style="color:#d4d4d4">        </span><span style="color:#5f9fdd">bl</span><span style="color:#d4d4d4">      </span><span style="color:#d4d4d4">(</span><span style="color:#5ecab0">$sSS21_builtinStringLiteral17utf8CodeUnitCount7isASCIISSBp_BwBi1_tcfC</span><span style="color:#d4d4d4">)</span></div><div style="height:4px;"><span style="color:#d4d4d4">        </span><span style="color:#5f9fdd">ldp</span><span style="color:#d4d4d4">     </span><span style="color:#5ecab0">x29</span><span style="color:#d4d4d4">,</span><span style="color:#d4d4d4"> </span><span style="color:#5ecab0">x30</span><span style="color:#d4d4d4">,</span><span style="color:#d4d4d4"> </span><span style="color:#d4d4d4">[</span><span style="color:#9aa2bd">sp</span><span style="color:#d4d4d4">]</span><span style="color:#d4d4d4">,</span><span style="color:#d4d4d4"> </span><span style="color:#b5cea8">#16</span></div><div style="height:4px;"><span style="color:#d4d4d4">        </span><span style="color:#5f9fdd">ret</span><span style="color:#d4d4d4"></span></div><div style="height:4px;"></div><div style="height:4px;"><span style="color:#5ecab0">Swift.Array._endMutation</span><span style="color:#d4d4d4">(</span><span style="color:#d4d4d4">)</span><span style="color:#d4d4d4"> </span><span style="color:#d4d4d4">-</span><span style="color:#d4d4d4">&gt;</span><span style="color:#d4d4d4"> </span><span style="color:#d4d4d4">(</span><span style="color:#d4d4d4">)</span><span style="color:#d4d4d4">:</span></div><div style="height:4px;"><span style="color:#d4d4d4">        </span><span style="color:#5f9fdd">ldr</span><span style="color:#d4d4d4">     </span><span style="color:#5ecab0">x8</span><span style="color:#d4d4d4">,</span><span style="color:#d4d4d4"> </span><span style="color:#d4d4d4">[</span><span style="color:#5ecab0">x20</span><span style="color:#d4d4d4">]</span></div><div style="height:4px;"><span style="color:#d4d4d4">        </span><span style="color:#5f9fdd">str</span><span style="color:#d4d4d4">     </span><span style="color:#5ecab0">x8</span><span style="color:#d4d4d4">,</span><span style="color:#d4d4d4"> </span><span style="color:#d4d4d4">[</span><span style="color:#5ecab0">x20</span><span style="color:#d4d4d4">]</span></div><div style="height:4px;"><span style="color:#d4d4d4">        </span><span style="color:#5f9fdd">ret</span><span style="color:#d4d4d4"></span></div><div style="height:4px;"></div><div style="height:4px;"><span style="color:#ce9178">&quot;.L.str.11.Hello World&quot;</span><span style="color:#d4d4d4">:</span></div><div style="height:4px;"></div><div style="height:4px;"><span style="color:#ce9178">&quot;.L.str.1.\n&quot;</span><span style="color:#d4d4d4">:</span></div><div style="height:4px;"></div><div style="height:4px;"><span style="color:#ce9178">&quot;.L.str.1. &quot;</span><span style="color:#d4d4d4">:</span></div><div style="height:4px;"></div><div style="height:4px;"><span style="color:#5f9fdd">__swift_reflection_version</span><span style="color:#d4d4d4">:</span></div><div style="height:4px;"><span style="color:#d4d4d4">        </span><span style="color:#5f9fdd">.hword</span><span style="color:#d4d4d4">  </span><span style="color:#b5cea8">3</span></div></div>
<div class="a" style="left:2996px;top:368px;width:1px;height:1380px;background:#3a3a3a;"></div>
<div class="a" style="left:2997px;top:434px;width:17px;height:4px;background:#8c8c8c;"></div>
<div class="a" style="left:956px;top:1748px;width:2058px;height:8px;background:#333;"></div>
<!-- ===== /EDITORS ===== -->
<!-- ===== Left pane content ===== -->
<div class="t" style="left:20px;top:198px;font-size:25px;line-height:28px;color:#e6e6e6;letter-spacing:-0.67px;">Swift source #1</div>
<div class="a" style="left:546px;top:228px;width:400px;height:76px;border-radius:11px;background:#454545;"></div>
<div class="a" style="left:570px;top:246px;width:40px;height:40px;border-radius:8px;background:#e05b43;"></div>
<div class="t" style="left:619px;top:249px;font-size:33px;line-height:36px;color:#efefef;">Swift</div>
<div class="t" style="left:281px;top:251px;font-size:29px;line-height:30px;font-family:'Liberation Serif',serif;font-weight:bold;color:#e6e6e6;">V</div>
<svg style="left:0;top:0" width="946" height="330">
 <!-- pencil -->
 <g fill="none" stroke="#e6e6e6" stroke-width="1.8" stroke-linejoin="round">
  <path d="M211.5 201 L215.5 205 L203 217.5 L198.5 218.5 L199.5 214 Z M209 203.5 L213 207.5 M201.5 211 L205.5 215"/>
 </g>
 <!-- maximize -->
 <path d="M913 197 H931 V215 H913 Z M915 201.5 V213 H929 V201.5 Z" fill="#7d7d7d" fill-rule="evenodd"/>
 <!-- A font icon -->
 <path d="M33.3 253.3 H37.9 L46 274.6 H48.7 V278 H40 V274.6 H42 L40.4 270 H30.8 L29.2 274.6 H31 V278 H21.9 V274.6 H24.8 Z M31.9 266.8 H39.3 L35.6 256.8 Z" fill="#ffffff"/>
 <path d="M60 260.8 H76 L68 269 Z" fill="#dddddd"/>
 <!-- save -->
 <path d="M119.5 253 H136.5 L142 258.5 V275.5 Q142 278 139.5 278 H119.5 Q117 278 117 275.5 V255.5 Q117 253 119.5 253 Z" fill="#ffffff"/>
 <rect x="122.5" y="257" width="12.5" height="6.8" rx="1.5" fill="#333"/>
 <circle cx="129.4" cy="270.7" r="3.6" fill="#333"/>
 <!-- plus -->
 <path d="M198.7 255.3 V275.7 M188.8 265.5 H208.8" stroke="#ffffff" stroke-width="4.4" stroke-linecap="round"/>
 <path d="M223 260.8 H239 L231 269 Z" fill="#dddddd"/>
 <!-- swift bird -->
 <g transform="translate(590 268) scale(1.08) translate(-590 -265.5)"><path d="M600.5 268 C602.5 261 599 254.5 593 250.5 C596 255 596.5 259.5 595 263 C590 259 584.5 254.5 580 250 C583.5 255 587 259 590 262 C586 259.5 580.5 255.5 577 252.5 C581 258.5 587 264.5 593 268.5 C589 270.5 582.5 271 575.5 267 C580 273.5 588.5 277 596 274 C598.5 273 601.5 273.5 603.5 276 C604 272 602.5 269.5 600.5 268 Z" fill="#ffffff"/></g>
 <!-- chevron -->
 <path d="M897 261 L906 270 L915 261" fill="none" stroke="#39414c" stroke-width="3"/>
</svg>

<!-- ===== Right pane content ===== -->
<div class="t" style="left:976px;top:198px;font-size:25px;line-height:28px;color:#e6e6e6;letter-spacing:-0.43px;">aarch64 swiftc 6.2 (Editor #1)</div>
<div class="a" style="left:956px;top:228px;width:2058px;height:76px;border-radius:13px 0 0 13px;background:#474747;"></div>
<div class="a" style="left:1469px;top:230px;width:67px;height:72px;background:#353535;"></div>
<div class="a" style="left:2970px;top:230px;width:44px;height:72px;border-radius:5px 0 0 5px;background:#333333;"></div>
<div class="t" style="left:981px;top:248px;font-size:33px;line-height:36px;color:#efefef;">aarch64 swiftc 6.2</div>
<div class="t" style="left:1560px;top:249px;font-size:32.6px;line-height:36px;color:#8c8c8c;">Compiler options...</div>
<div class="t" style="left:1112.8px;top:319px;font-size:29px;line-height:32px;color:#e6e6e6;">Output...</div>
<div class="t" style="left:1328.6px;top:319px;font-size:28.2px;line-height:32px;color:#e6e6e6;">Filter...</div>
<div class="t" style="left:1518px;top:319px;font-size:28.8px;line-height:32px;color:#e6e6e6;">Libraries</div>
<div class="t" style="left:1708px;top:319px;font-size:28.9px;line-height:32px;color:#e6e6e6;">Overrides</div>
<div class="t" style="left:1913px;top:319px;font-size:28.2px;line-height:32px;color:#e6e6e6;">Add new...</div>
<div class="t" style="left:2149px;top:319px;font-size:29px;line-height:32px;color:#e6e6e6;">Add tool...</div>
<svg style="left:0;top:0" width="3014" height="370">
 <!-- pencil -->
 <g fill="none" stroke="#e6e6e6" stroke-width="1.8" stroke-linejoin="round">
  <path d="M1315.5 201 L1319.5 205 L1307 217.5 L1302.5 218.5 L1303.5 214 Z M1313 203.5 L1317 207.5 M1305.5 211 L1309.5 215"/>
 </g>
 <!-- close X -->
 <path d="M1338 201.8 L1352 216 M1352 201.8 L1338 216" stroke="#ffffff" stroke-width="3.3" stroke-linecap="round"/>
 <!-- maximize / close right -->
 <path d="M2955 197 H2973 V215 H2955 Z M2957 201.5 V213 H2971 V201.5 Z" fill="#7d7d7d" fill-rule="evenodd"/>
 <path d="M2992.5 198.5 L3007.5 213.5 M3007.5 198.5 L2992.5 213.5" stroke="#7d7d7d" stroke-width="3" stroke-linecap="round"/>
 <!-- chevron compiler -->
 <path d="M1355 261 L1364 270 L1373 261" fill="none" stroke="#39414c" stroke-width="3"/>
 <!-- popout -->
 <g fill="none" stroke="#e6e6e6" stroke-width="4.1" stroke-linecap="round" stroke-linejoin="round">
  <path d="M1431 259.8 H1426 Q1423.4 259.8 1423.4 262.4 V276 Q1423.4 278.6 1426 278.6 H1439.3 Q1441.9 278.6 1441.9 276 V271.5"/>
  <path d="M1434 268.5 L1446 256.5 M1439 256.3 H1446.3 V263.3"/>
 </g>
 <!-- check -->
 <circle cx="1502.5" cy="265.4" r="14.1" fill="#5bb83b"/>
 <path d="M1496.7 266.9 L1500.7 271 L1508.4 260.3" fill="none" stroke="#353535" stroke-width="2.5" stroke-linecap="round"/>
 <!-- options caret -->
 <path d="M2987.6 260.8 H3004.7 L2996.2 269 Z" fill="#e6e6e6"/>
 <!-- A font icon -->
 <path d="M989.3 322.6 H993.9 L1002 344 H1004.7 V347.4 H996 V344 H998 L996.4 339.4 H986.8 L985.2 344 H987 V347.4 H977.9 V344 H980.8 Z M987.9 336.2 H995.3 L991.6 326.2 Z" fill="#ffffff"/>
 <path d="M1016.7 329.8 H1032 L1024.35 338 Z" fill="#dddddd"/>
 <!-- gear -->
 <path d="M1081.32 323.91 L1082.62 319.53 L1088.98 319.53 L1090.28 323.91 A11.50 11.50 0 0 1 1092.73 325.33 L1097.17 324.27 L1100.35 329.77 L1097.21 333.08 A11.50 11.50 0 0 1 1097.21 335.92 L1100.35 339.23 L1097.17 344.73 L1092.73 343.67 A11.50 11.50 0 0 1 1090.28 345.09 L1088.98 349.47 L1082.62 349.47 L1081.32 345.09 A11.50 11.50 0 0 1 1078.87 343.67 L1074.43 344.73 L1071.25 339.23 L1074.39 335.92 A11.50 11.50 0 0 1 1074.39 333.08 L1071.25 329.77 L1074.43 324.27 L1078.87 325.33 A11.50 11.50 0 0 1 1081.32 323.91 Z" fill="#ffffff"/>
 <circle cx="1085.8" cy="334.5" r="4.1" fill="#333"/>
 <path d="M1232 329.8 H1247.8 L1239.9 338.1 Z" fill="#dddddd"/>
 <!-- funnel -->
 <path d="M1289 323.7 H1314.6 Q1316.5 323.7 1315.5 325.5 L1305.5 336.5 V346 Q1305.5 348.4 1303 348.4 L1300 346.5 Q1298.3 345.5 1298.3 343.5 V336.5 L1288.2 325.5 Q1287.2 323.7 1289 323.7 Z" fill="#ffffff"/>
 <path d="M1421.4 329.8 H1437 L1429.2 338 Z" fill="#dddddd"/>
 <!-- book -->
 <path d="M1482 320 H1503.3 V343.5 Q1501.8 344.5 1501.8 346 Q1501.8 347 1503.3 347.5 V348.4 H1482.5 Q1478.9 348.4 1478.9 344.8 V323.2 Q1478.9 320 1482 320 Z" fill="#ffffff"/>
 <path d="M1487 328.8 H1497 M1487 333.8 H1497" stroke="#333" stroke-width="2.2" stroke-linecap="round"/>
 <path d="M1483 342.5 H1500 V345.5 H1483 Z" fill="#333"/>
 <!-- wrench -->
 <path d="M1685 320.5 Q1680 320 1677 323.5 Q1673.5 327.5 1675.5 333 L1667.5 341 Q1665.5 343.5 1668 346.5 Q1670.5 349 1673 347 L1681 339 Q1686.5 341 1690.5 337.5 Q1694.5 334 1693.5 328.5 L1689 332.5 L1684.5 331.5 L1683 327 Z" fill="#ffffff"/>
 <!-- plus -->
 <path d="M1886.3 324.3 V344.6 M1876.2 334.5 H1896.5" stroke="#ffffff" stroke-width="4.2" stroke-linecap="round"/>
 <path d="M2053 329.9 H2069 L2061 338 Z" fill="#dddddd"/>
 <!-- add tool (screwdriver) -->
 <g transform="translate(2108.5 348.5) rotate(-45)" fill="#ffffff">
  <rect x="0" y="-4" width="20" height="8" rx="3"/>
  <rect x="18" y="-1.8" width="9" height="3.6"/>
  <rect x="25.5" y="-3" width="15.5" height="6" rx="2.8"/>
 </g>
 <path d="M2288 329.9 H2303.6 L2295.8 338 Z" fill="#dddddd"/>
</svg>

</body></html>
